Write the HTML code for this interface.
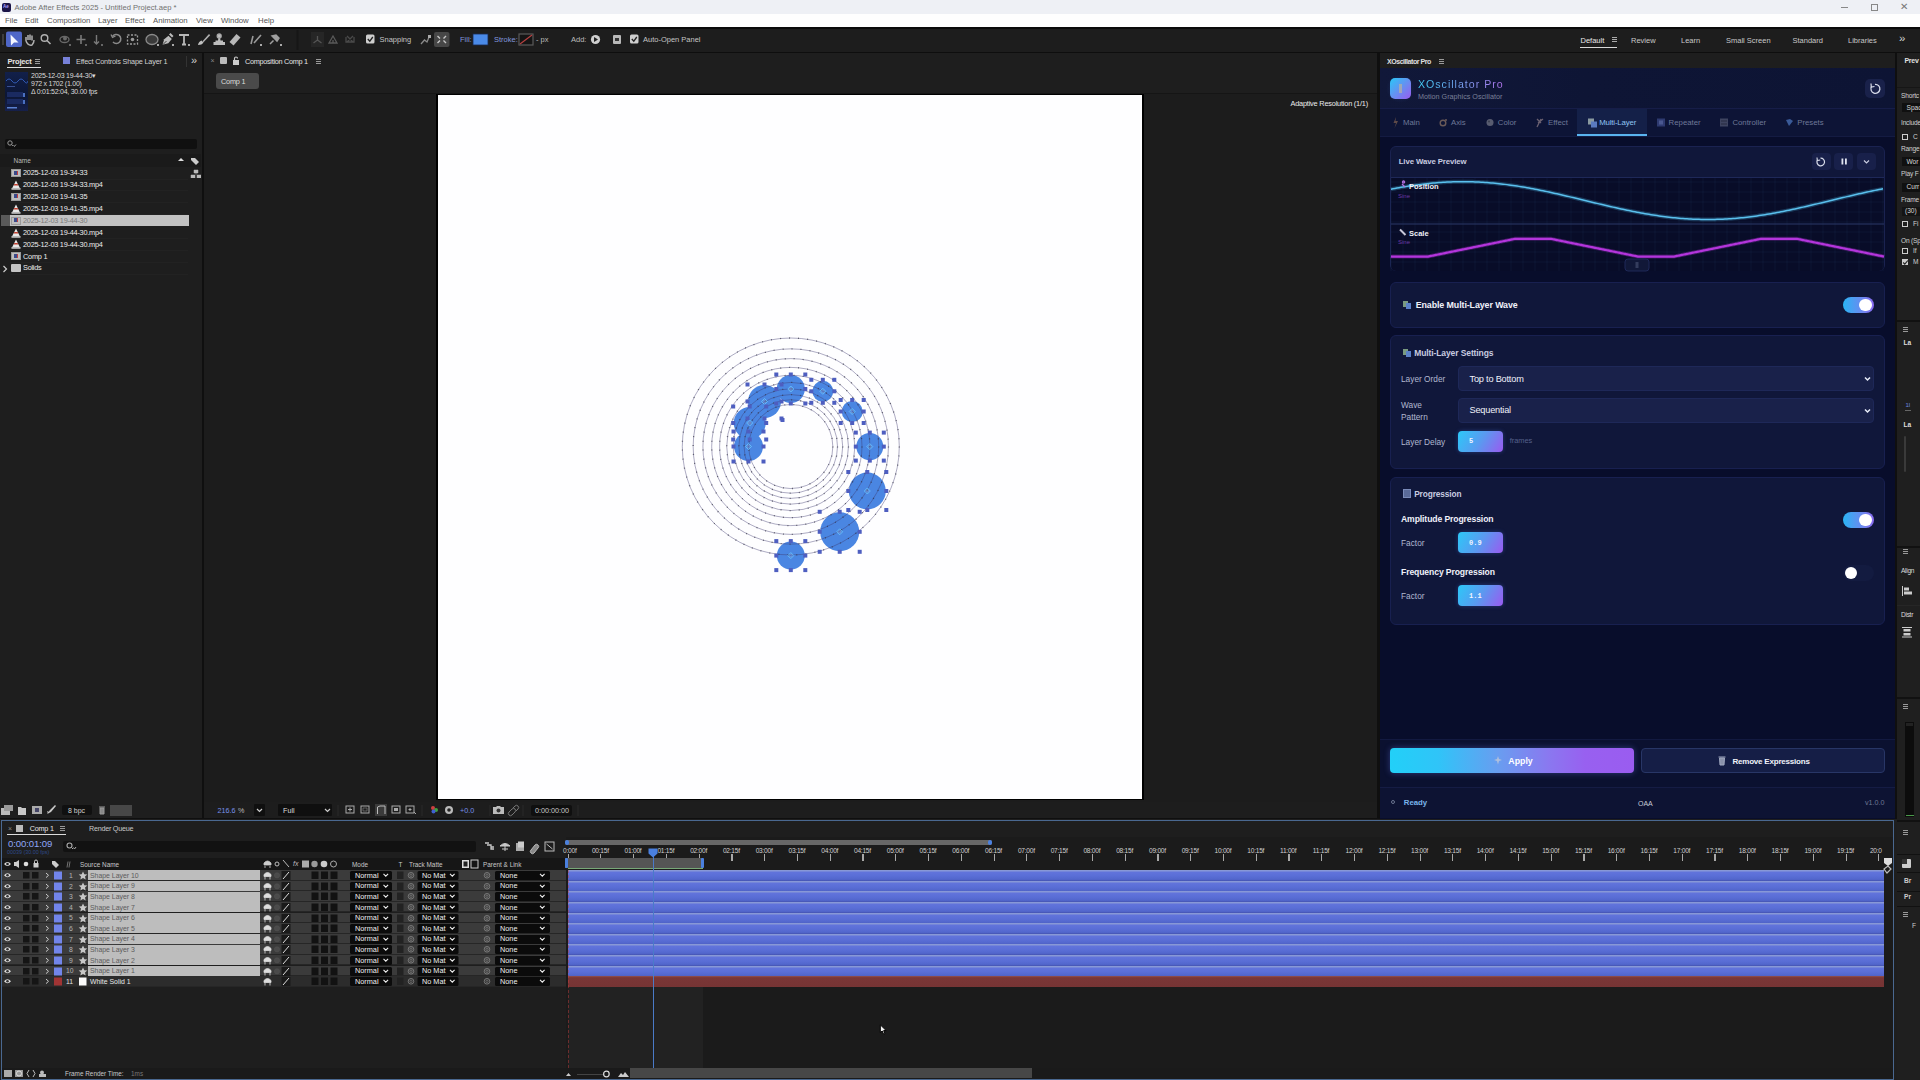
<!DOCTYPE html>
<html><head><meta charset="utf-8">
<style>
*{margin:0;padding:0;box-sizing:border-box}
html,body{width:1920px;height:1080px;overflow:hidden;background:#1c1c1c;font-family:"Liberation Sans",sans-serif;}
.a{position:absolute}
.t{position:absolute;white-space:nowrap;line-height:1}
#title{left:0;top:0;width:1920px;height:14px;background:#eef0f5}
#menu{left:0;top:14px;width:1920px;height:13px;background:#fefefe}
#tool{left:0;top:27px;width:1920px;height:26px;background:#1d1d1d;border-top:2px solid #0b0b0b;border-bottom:1px solid #0e0e0e}
.mt{font-size:7.8px;color:#555;top:17px}
.tt{font-size:7px;color:#bdbdbd}
.g{color:#c4c4c4}
</style></head><body>
<!-- title bar -->
<div id="title" class="a"></div>
<div class="a" style="left:2px;top:3px;width:9px;height:8.5px;background:#1a1446;border-radius:2px"></div><div class="t" style="left:3px;top:5px;font-size:4.5px;color:#a8a0ff;font-weight:bold">Ae</div>
<div class="t" style="left:14.5px;top:3.5px;font-size:7.6px;color:#707070">Adobe After Effects 2025 - Untitled Project.aep *</div>
<div class="a" style="left:1841px;top:7px;width:7px;height:1px;background:#888"></div>
<div class="a" style="left:1871px;top:4px;width:7px;height:7px;border:1px solid #888"></div>
<div class="t" style="left:1900px;top:2px;font-size:10px;color:#777">✕</div>
<!-- menu -->
<div id="menu" class="a"></div>
<div class="t mt" style="left:5px">File</div>
<div class="t mt" style="left:25px">Edit</div>
<div class="t mt" style="left:47px">Composition</div>
<div class="t mt" style="left:98px">Layer</div>
<div class="t mt" style="left:125px">Effect</div>
<div class="t mt" style="left:153px">Animation</div>
<div class="t mt" style="left:196px">View</div>
<div class="t mt" style="left:221px">Window</div>
<div class="t mt" style="left:258px">Help</div>
<!-- toolbar -->
<div id="tool" class="a"></div>

<svg class="a" style="left:0;top:27px" width="720" height="26" viewBox="0 27 720 26">
<g fill="none" stroke="#a8a8a8" stroke-width="1.3">
<line x1="3" y1="34" x2="3" y2="45" stroke="#4a4a4a" stroke-width="1.5"/>
<rect x="6" y="31.5" width="16" height="15.5" rx="2" fill="#4f67c8" stroke="none"/>
<path d="M10.5 34.5 L18.5 42.5 L14 42.5 L11 45.5 Z" fill="#f4f6ff" stroke="none"/>
<path d="M26 41 L26 37 M28 40 L28 35 M30 40 L30 34.5 M32 40.5 L32 35.5 M26 41 Q28 46 32 45 Q34 43 34 40" stroke="#b0b0b0" stroke-width="1.5"/>
<circle cx="44.5" cy="38" r="3.3" stroke="#b0b0b0" stroke-width="1.4"/><line x1="47" y1="40.5" x2="50.5" y2="44" stroke="#b0b0b0" stroke-width="1.6"/>
<ellipse cx="64.5" cy="39.5" rx="4.5" ry="3" stroke="#6a6a6a"/><circle cx="65" cy="38.5" r="2" fill="#6a6a6a" stroke="none"/>
<path d="M81 35 V44 M76.5 39.5 H85.5" stroke="#7a7a7a" stroke-width="1.6"/>
<path d="M96.5 35 V44 M94 41.5 L96.5 44 L99 41.5" stroke="#7a7a7a" stroke-width="1.4"/>
<path d="M112.5 36.5 A4.5 4.5 0 1 1 113 42" stroke="#8a8a8a" stroke-width="1.5"/><path d="M111 34.5 L112.5 37.5 L115.5 36" stroke="#8a8a8a"/>
<rect x="127.5" y="35" width="10" height="9" stroke="#9a9a9a" stroke-dasharray="2 1.5"/><circle cx="132.5" cy="39.5" r="1.8" fill="#9a9a9a" stroke="none"/>
<ellipse cx="152" cy="39.5" rx="6" ry="5" fill="#3a3a3a" stroke="#8a8a8a"/>
<path d="M162.5 44.8 L164.2 39.2 L168.5 35.8 L171.8 39 L168.3 43.2 Z" fill="#bdbdbd" stroke="none"/><path d="M169 34.5 L170.5 33 L173.5 36 L172 37.5 Z" fill="#bdbdbd" stroke="none"/><path d="M163 44.5 L166.5 41" stroke="#1d1d1d" stroke-width="0.8"/>
<path d="M179 35 H189 M184 35 V44.5 M182 44.5 H186" stroke="#b8b8b8" stroke-width="1.8"/>
<path d="M198 45 Q198.5 41.5 201.5 40.5 L203.5 42.5 Q202 45 198 45 Z" fill="#c0c0c0" stroke="none"/><path d="M202.5 41.2 L209 34 L210.2 35.2 L203.5 42.2 Z" fill="#b0b0b0" stroke="none"/>
<path d="M213.5 42 H225 V45 H213.5 Z M215.5 40.5 H223 V42 H215.5Z M218 40.5 L218.5 37.5 H220 L220.5 40.5 Z" fill="#bdbdbd" stroke="none"/><circle cx="219.2" cy="36" r="2" fill="#bdbdbd"/>
<path d="M229.5 42 L236.5 34 L240.5 37.5 L233.5 45.5 Z" fill="#b8b8b8" stroke="none"/>
<path d="M251 44 L253 36 M254 43 L261 35" stroke="#9a9a9a" stroke-width="1.6"/>
<path d="M270 44 L273.5 40.5 M272 36 L276 35 L279 38 L277 41 Z" fill="#a0a0a0" stroke="#a0a0a0" stroke-width="1.5"/>
<g fill="#aaa" stroke="none"><rect x="157" y="44" width="2" height="2"/><rect x="172" y="44" width="2" height="2"/><rect x="188" y="44" width="2" height="2"/><rect x="260" y="44" width="2" height="2"/><rect x="280" y="44" width="2" height="2"/><rect x="69" y="44" width="2" height="2" fill="#666"/><rect x="85" y="44" width="2" height="2" fill="#666"/><rect x="101" y="44" width="2" height="2" fill="#666"/></g>
<line x1="297.5" y1="30" x2="297.5" y2="50" stroke="#161616" stroke-width="2"/>
<rect x="311" y="32" width="13" height="15" fill="#262626" stroke="none"/>
<path d="M317.5 36 V40 L313.5 43 M317.5 40 L321.5 43" stroke="#555"/>
<path d="M333 36 L329 43 H337 Z M333 40 V43" stroke="#5a5a5a"/>
<path d="M347 36 L353 42 M347 42 L353 36 M346 37 V42 H354 V37" stroke="#4a4a4a"/>
<rect x="366" y="34.5" width="8.5" height="9" rx="1.5" fill="#cfcfcf" stroke="none"/>
<path d="M367.8 39 L369.8 41.2 L372.8 37" stroke="#222" stroke-width="1.3"/>
<path d="M421 44 L424.5 40 L427 42 L429.5 36" stroke="#8a8a8a"/><rect x="428" y="35" width="3" height="3" fill="#aaa" stroke="none"/>
<rect x="434" y="32" width="15.5" height="15" rx="2" fill="#474747" stroke="none"/>
<path d="M437.5 36 L440 38.5 M446 36 L443.5 38.5 M437.5 43 L440 40.5 M446 43 L443.5 40.5" stroke="#c8c8c8" stroke-width="1.4"/>
<rect x="473" y="34" width="15" height="11" fill="#4a8ae8" stroke="#1a2a50" stroke-width="0.8"/>
<rect x="519" y="34" width="14" height="11" fill="#151515" stroke="#5a5a5a" stroke-width="1.2"/>
<line x1="520" y1="44" x2="532" y2="35" stroke="#b84040" stroke-width="1.2"/>
<circle cx="595.5" cy="39.5" r="4.6" fill="#cfcfcf" stroke="none"/><path d="M594 37 L598 39.5 L594 42 Z" fill="#222" stroke="none"/>
<rect x="613" y="35" width="8" height="9" rx="1" fill="#b8b8b8" stroke="none"/><rect x="615" y="38" width="4" height="3" fill="#333" stroke="none"/>
<rect x="630" y="34.5" width="8.5" height="9" rx="1.5" fill="#cfcfcf" stroke="none"/>
<path d="M631.8 39 L633.8 41.2 L636.8 37" stroke="#222" stroke-width="1.3"/>
</g></svg>
<div class="t" style="left:379.5px;top:36px;font-size:7.5px;color:#c4c4c4">Snapping</div>
<div class="t" style="left:460px;top:36px;font-size:7.5px;color:#8196dc">Fill:</div>
<div class="t" style="left:494px;top:36px;font-size:7.5px;color:#8196dc">Stroke:</div>
<div class="t" style="left:536px;top:36px;font-size:7.5px;color:#bbb">- px</div>
<div class="t" style="left:571px;top:36px;font-size:7.5px;color:#bbb">Add:</div>
<div class="t" style="left:643px;top:36px;font-size:7.5px;color:#c4c4c4">Auto-Open Panel</div>
<div class="t" style="left:1580.5px;top:36.5px;font-size:7.5px;color:#e8e8e8">Default</div>
<div class="a" style="left:1612px;top:37px;width:5px;height:1px;background:#aaa;box-shadow:0 2px 0 #aaa,0 4px 0 #aaa"></div>
<div class="a" style="left:1580px;top:46.5px;width:37px;height:1.5px;background:#d8d8d8"></div>
<div class="t" style="left:1631px;top:36.5px;font-size:7.5px;color:#c8c8c8">Review</div>
<div class="t" style="left:1681px;top:36.5px;font-size:7.5px;color:#c8c8c8">Learn</div>
<div class="t" style="left:1726px;top:36.5px;font-size:7.5px;color:#c8c8c8">Small Screen</div>
<div class="t" style="left:1792.5px;top:36.5px;font-size:7.5px;color:#c8c8c8">Standard</div>
<div class="t" style="left:1848px;top:36.5px;font-size:7.5px;color:#c8c8c8">Libraries</div>
<div class="t" style="left:1899px;top:33px;font-size:11.5px;color:#d0d0d0">»</div>


<!-- panels bg -->
<div class="a" style="left:0;top:53px;width:1920px;height:1027px;background:#0f0f0f"></div>
<div class="a" style="left:0;top:53px;width:201.5px;height:765px;background:#1e1e1e"></div>
<div class="a" style="left:204px;top:53px;width:1173px;height:765px;background:#1e1e1e"></div>
<div class="a" style="left:1897px;top:53px;width:23px;height:1027px;background:#1f1f1f"></div>
<!-- project header -->
<div class="t" style="left:7.5px;top:57.5px;font-size:7.5px;color:#e6e6e6;font-weight:bold;letter-spacing:-0.2px">Project</div>
<div class="a" style="left:7px;top:66.5px;width:34px;height:1.2px;background:#dcdcdc"></div>
<div class="a" style="left:35px;top:59px;width:5px;height:1px;background:#999;box-shadow:0 2px 0 #999,0 4px 0 #999"></div>
<div class="a" style="left:62.5px;top:57px;width:7.5px;height:7px;background:#7680d8"></div>
<div class="t" style="left:76px;top:57.5px;font-size:7.3px;color:#d0d0d0;letter-spacing:-0.2px">Effect Controls Shape Layer 1</div>
<div class="a" style="left:186px;top:56px;width:1px;height:11px;background:#333"></div>
<div class="t" style="left:191px;top:54.5px;font-size:11px;color:#d0d0d0">»</div>
<!-- thumb -->
<div class="a" style="left:5px;top:72px;width:23px;height:39px;background:linear-gradient(180deg,#12204a,#0c1635 60%,#16204a)"></div>
<svg class="a" style="left:5px;top:72px" width="23" height="39"><path d="M1 9 Q4 5 7 9 T13 9 T19 9 T23 9" stroke="#3a6ad0" fill="none" stroke-width="0.8"/><rect x="2" y="14" width="8" height="1" fill="#3a5090"/><rect x="2" y="20" width="16" height="5" fill="#1a2a60"/><rect x="2" y="27" width="16" height="5" fill="#1a2a60"/><rect x="2" y="35" width="10" height="1.5" fill="#5a80d0"/><rect x="18" y="21" width="2" height="4" fill="#4a70c0"/><rect x="18" y="28" width="2" height="4" fill="#4a70c0"/></svg>
<div class="t" style="left:31px;top:72px;font-size:7px;color:#dadada;letter-spacing:-0.25px">2025-12-03 19-44-30▾</div>
<div class="t" style="left:31px;top:80px;font-size:7px;color:#dadada;letter-spacing:-0.25px">972 x 1702 (1.00)</div>
<div class="t" style="left:31px;top:88px;font-size:7px;color:#dadada;letter-spacing:-0.25px">Δ 0:01:52:04, 30.00 fps</div>
<!-- search -->
<div class="a" style="left:5px;top:139px;width:192px;height:10px;background:#101010;border-radius:2px"></div>
<svg class="a" style="left:7px;top:140px" width="10" height="8"><circle cx="3" cy="3" r="2.2" stroke="#999" fill="none" stroke-width="1"/><path d="M4.5 4.5 L6 6 M6.5 5 L7.5 6.5 L9 4.5" stroke="#999" fill="none" stroke-width="0.9"/></svg>
<div class="a" style="left:0;top:154px;width:201px;height:13px;background:#1a1a1a"></div>
<div class="t" style="left:13.5px;top:157.5px;font-size:6.5px;color:#bbb">Name</div>
<svg class="a" style="left:177px;top:156px" width="24" height="22"><path d="M1 5 L4 2 L7 5 Z" fill="#ddd"/><path d="M14 2 H18 L22 6 L19 9 L14 4 Z" fill="#ccc"/><path d="M17 14 h4 v3 h-4z M14 19 h4 v3 h-4z M20 19 h4 v3 h-4z M19 17 v2" fill="#bbb" stroke="#bbb" stroke-width="0.5"/></svg>

<div class="a" style="left:10px;top:178.5px;width:178px;height:0.6px;background:#222"></div>
<div class="a" style="left:11px;top:169.0px;width:10px;height:8px;background:#bdbdbd;border:1px solid #9a9a9a"></div><div class="a" style="left:14px;top:170.5px;width:4px;height:4px;background:#3a4a8a;border-right:1.5px solid #c04040"></div>
<div class="t" style="left:23px;top:169.2px;font-size:7.35px;color:#ececec;letter-spacing:-0.25px">2025-12-03 19-34-33</div>
<div class="a" style="left:10px;top:190.4px;width:178px;height:0.6px;background:#222"></div>
<svg class="a" style="left:11px;top:179.9px" width="10" height="10"><path d="M5 0.5 L9.5 9.5 H0.5 Z" fill="#e8e8e8"/><path d="M3.3 4 H6.7 L7.3 5.5 H2.7 Z" fill="#c04030"/><rect x="0.5" y="8" width="9" height="1.5" fill="#bbb"/></svg>
<div class="t" style="left:23px;top:181.1px;font-size:7.35px;color:#ececec;letter-spacing:-0.25px">2025-12-03 19-34-33.mp4</div>
<div class="a" style="left:10px;top:202.3px;width:178px;height:0.6px;background:#222"></div>
<div class="a" style="left:11px;top:192.8px;width:10px;height:8px;background:#bdbdbd;border:1px solid #9a9a9a"></div><div class="a" style="left:14px;top:194.3px;width:4px;height:4px;background:#3a4a8a;border-right:1.5px solid #c04040"></div>
<div class="t" style="left:23px;top:193.0px;font-size:7.35px;color:#ececec;letter-spacing:-0.25px">2025-12-03 19-41-35</div>
<div class="a" style="left:10px;top:214.2px;width:178px;height:0.6px;background:#222"></div>
<svg class="a" style="left:11px;top:203.7px" width="10" height="10"><path d="M5 0.5 L9.5 9.5 H0.5 Z" fill="#e8e8e8"/><path d="M3.3 4 H6.7 L7.3 5.5 H2.7 Z" fill="#c04030"/><rect x="0.5" y="8" width="9" height="1.5" fill="#bbb"/></svg>
<div class="t" style="left:23px;top:204.9px;font-size:7.35px;color:#ececec;letter-spacing:-0.25px">2025-12-03 19-41-35.mp4</div>
<div class="a" style="left:1px;top:214.7px;width:187.5px;height:11.5px;background:#c2c2c2"></div>
<div class="a" style="left:1px;top:214.7px;width:9px;height:11.5px;background:#5a5a5a"></div>
<div class="a" style="left:11px;top:216.6px;width:10px;height:8px;background:#bdbdbd;border:1px solid #9a9a9a"></div><div class="a" style="left:14px;top:218.1px;width:4px;height:4px;background:#3a4a8a;border-right:1.5px solid #c04040"></div>
<div class="t" style="left:23px;top:216.8px;font-size:7.35px;color:#7a7a7a;letter-spacing:-0.25px">2025-12-03 19-44-30</div>
<div class="a" style="left:10px;top:238.0px;width:178px;height:0.6px;background:#222"></div>
<svg class="a" style="left:11px;top:227.5px" width="10" height="10"><path d="M5 0.5 L9.5 9.5 H0.5 Z" fill="#e8e8e8"/><path d="M3.3 4 H6.7 L7.3 5.5 H2.7 Z" fill="#c04030"/><rect x="0.5" y="8" width="9" height="1.5" fill="#bbb"/></svg>
<div class="t" style="left:23px;top:228.7px;font-size:7.35px;color:#ececec;letter-spacing:-0.25px">2025-12-03 19-44-30.mp4</div>
<div class="a" style="left:10px;top:249.9px;width:178px;height:0.6px;background:#222"></div>
<svg class="a" style="left:11px;top:239.4px" width="10" height="10"><path d="M5 0.5 L9.5 9.5 H0.5 Z" fill="#e8e8e8"/><path d="M3.3 4 H6.7 L7.3 5.5 H2.7 Z" fill="#c04030"/><rect x="0.5" y="8" width="9" height="1.5" fill="#bbb"/></svg>
<div class="t" style="left:23px;top:240.6px;font-size:7.35px;color:#ececec;letter-spacing:-0.25px">2025-12-03 19-44-30.mp4</div>
<div class="a" style="left:10px;top:261.8px;width:178px;height:0.6px;background:#222"></div>
<div class="a" style="left:11px;top:252.3px;width:10px;height:8px;background:#bdbdbd;border:1px solid #9a9a9a"></div><div class="a" style="left:14px;top:253.8px;width:4px;height:4px;background:#3a4a8a;border-right:1.5px solid #c04040"></div>
<div class="t" style="left:23px;top:252.5px;font-size:7.35px;color:#ececec;letter-spacing:-0.25px">Comp 1</div>
<div class="a" style="left:10px;top:273.6px;width:178px;height:0.6px;background:#222"></div>
<div class="a" style="left:11px;top:264.2px;width:10px;height:8px;background:#c4c4c4;border-radius:1px"></div><svg class="a" style="left:2px;top:265.2px" width="6" height="8"><path d="M1.5 1 L4.5 4 L1.5 7" stroke="#ccc" fill="none" stroke-width="1.2"/></svg>
<div class="t" style="left:23px;top:264.4px;font-size:7.35px;color:#ececec;letter-spacing:-0.25px">Solids</div>

<!-- project bottom bar -->
<svg class="a" style="left:0;top:802px" width="140" height="16">
<rect x="1" y="6" width="9" height="7" fill="#bbb"/><rect x="4" y="3" width="9" height="6" fill="#999"/>
<path d="M18 5 h3 l1 1 h4 v7 h-8z" fill="#c8c8c8"/>
<rect x="32" y="4" width="10" height="8" fill="#aaa"/><rect x="35" y="6" width="4" height="4" fill="#446"/>
<path d="M47 12 L50 8 L55 3 L56 4 L51 10 Z M47 9 L49 10 L48 12 Z" fill="#c8c8c8"/>
<rect x="62" y="3" width="30" height="10" rx="2" fill="#101010"/>
<path d="M99 5 h6 M100 6 h4 v6 h-4z" stroke="#999" fill="#888" stroke-width="1"/>
<rect x="110" y="3" width="22" height="11" fill="#474747"/>
</svg>
<div class="t" style="left:68px;top:807px;font-size:7px;color:#d0d0d0">8 bpc</div>


<!-- comp header -->
<div class="t" style="left:210.5px;top:57px;font-size:7px;color:#888">×</div>
<div class="a" style="left:220px;top:57px;width:6.5px;height:6.5px;background:#bbb;border-radius:1px"></div>
<svg class="a" style="left:232px;top:56px" width="8" height="9"><rect x="1" y="4" width="6" height="5" fill="#ccc"/><path d="M2.5 4 V2.5 A1.5 1.5 0 0 1 5.5 2.5" stroke="#ccc" fill="none" stroke-width="1.2"/></svg>
<div class="t" style="left:245px;top:57.5px;font-size:7.3px;color:#e2e2e2;letter-spacing:-0.3px">Composition Comp 1</div>
<div class="a" style="left:316px;top:59px;width:5px;height:1px;background:#999;box-shadow:0 2px 0 #999,0 4px 0 #999"></div>
<div class="a" style="left:216px;top:73px;width:43px;height:16px;background:#4a4a4a;border-radius:3px"></div>
<div class="t" style="left:221px;top:77.5px;font-size:7.3px;color:#dcdcdc;letter-spacing:-0.2px">Comp 1</div>
<div class="a" style="left:204px;top:93px;width:1173px;height:1px;background:#151515"></div>
<div class="a" style="left:204px;top:94px;width:1173px;height:708px;background:#1c1c1c"></div>
<div class="t" style="left:1290.5px;top:99.5px;font-size:7.35px;color:#ececec;letter-spacing:-0.2px">Adaptive Resolution (1/1)</div>
<div class="a" style="left:436px;top:93.5px;width:707.5px;height:706.5px;background:#000"></div>
<div class="a" style="left:437.5px;top:95px;width:704.5px;height:704px;background:#fefeff"></div>
<svg class="a" style="left:437.5px;top:95px" width="705" height="704" viewBox="437.5 95 705 704">
<circle cx="790.3" cy="389" r="14" fill="#4a86e2"/>
<circle cx="822.3" cy="391.3" r="10.5" fill="#4a86e2"/>
<circle cx="851.7" cy="411.5" r="10.5" fill="#4a86e2"/>
<circle cx="869.3" cy="446.6" r="13.5" fill="#4a86e2"/>
<circle cx="866.8" cy="491" r="18.5" fill="#4a86e2"/>
<circle cx="839.2" cy="531.8" r="19.5" fill="#4a86e2"/>
<circle cx="790.3" cy="555.6" r="14" fill="#4a86e2"/>
<circle cx="764" cy="401.5" r="16.5" fill="#4a86e2"/>
<circle cx="749.2" cy="423" r="16" fill="#4a86e2"/>
<circle cx="748" cy="446.5" r="14.5" fill="#4a86e2"/>
<circle cx="790.3" cy="446.5" r="108.50" fill="none" stroke="rgba(60,55,110,0.6)" stroke-width="0.7"/>
<circle cx="790.3" cy="446.5" r="108.50" fill="none" stroke="rgba(50,50,65,0.7)" stroke-width="1.3" stroke-dasharray="1 8.090"/>
<circle cx="790.3" cy="446.5" r="97.65" fill="none" stroke="rgba(60,55,110,0.6)" stroke-width="0.7"/>
<circle cx="790.3" cy="446.5" r="97.65" fill="none" stroke="rgba(50,50,65,0.7)" stroke-width="1.3" stroke-dasharray="1 8.023"/>
<circle cx="790.3" cy="446.5" r="87.89" fill="none" stroke="rgba(60,55,110,0.6)" stroke-width="0.7"/>
<circle cx="790.3" cy="446.5" r="87.89" fill="none" stroke="rgba(50,50,65,0.7)" stroke-width="1.3" stroke-dasharray="1 8.052"/>
<circle cx="790.3" cy="446.5" r="79.10" fill="none" stroke="rgba(60,55,110,0.6)" stroke-width="0.7"/>
<circle cx="790.3" cy="446.5" r="79.10" fill="none" stroke="rgba(50,50,65,0.7)" stroke-width="1.3" stroke-dasharray="1 8.036"/>
<circle cx="790.3" cy="446.5" r="71.19" fill="none" stroke="rgba(60,55,110,0.6)" stroke-width="0.7"/>
<circle cx="790.3" cy="446.5" r="71.19" fill="none" stroke="rgba(50,50,65,0.7)" stroke-width="1.3" stroke-dasharray="1 8.128"/>
<circle cx="790.3" cy="446.5" r="64.07" fill="none" stroke="rgba(60,55,110,0.6)" stroke-width="0.7"/>
<circle cx="790.3" cy="446.5" r="64.07" fill="none" stroke="rgba(50,50,65,0.7)" stroke-width="1.3" stroke-dasharray="1 8.149"/>
<circle cx="790.3" cy="446.5" r="57.66" fill="none" stroke="rgba(60,55,110,0.6)" stroke-width="0.7"/>
<circle cx="790.3" cy="446.5" r="57.66" fill="none" stroke="rgba(50,50,65,0.7)" stroke-width="1.3" stroke-dasharray="1 8.057"/>
<circle cx="790.3" cy="446.5" r="51.90" fill="none" stroke="rgba(60,55,110,0.6)" stroke-width="0.7"/>
<circle cx="790.3" cy="446.5" r="51.90" fill="none" stroke="rgba(50,50,65,0.7)" stroke-width="1.3" stroke-dasharray="1 8.057"/>
<circle cx="790.3" cy="446.5" r="46.71" fill="none" stroke="rgba(60,55,110,0.6)" stroke-width="0.7"/>
<circle cx="790.3" cy="446.5" r="46.71" fill="none" stroke="rgba(50,50,65,0.7)" stroke-width="1.3" stroke-dasharray="1 8.171"/>
<circle cx="790.3" cy="446.5" r="42.04" fill="none" stroke="rgba(60,55,110,0.6)" stroke-width="0.7"/>
<circle cx="790.3" cy="446.5" r="42.04" fill="none" stroke="rgba(50,50,65,0.7)" stroke-width="1.3" stroke-dasharray="1 8.107"/>
<rect x="773.8" y="372.5" width="4" height="4" fill="#4e5ec0"/>
<rect x="773.8" y="387.0" width="4" height="4" fill="#4e5ec0"/>
<rect x="773.8" y="401.5" width="4" height="4" fill="#4e5ec0"/>
<rect x="788.3" y="372.5" width="4" height="4" fill="#4e5ec0"/>
<rect x="788.3" y="401.5" width="4" height="4" fill="#4e5ec0"/>
<rect x="802.8" y="372.5" width="4" height="4" fill="#4e5ec0"/>
<rect x="802.8" y="387.0" width="4" height="4" fill="#4e5ec0"/>
<rect x="802.8" y="401.5" width="4" height="4" fill="#4e5ec0"/>
<path d="M787.3 389 L790.3 386 L793.3 389 L790.3 392 Z" fill="none" stroke="#6ac8ff" stroke-width="0.8"/><circle cx="790.3" cy="389" r="1.2" fill="none" stroke="#8a9ac8" stroke-width="0.6"/>
<rect x="808.8" y="377.8" width="4" height="4" fill="#4e5ec0"/>
<rect x="808.8" y="389.3" width="4" height="4" fill="#4e5ec0"/>
<rect x="808.8" y="400.8" width="4" height="4" fill="#4e5ec0"/>
<rect x="820.3" y="377.8" width="4" height="4" fill="#4e5ec0"/>
<rect x="820.3" y="400.8" width="4" height="4" fill="#4e5ec0"/>
<rect x="831.8" y="377.8" width="4" height="4" fill="#4e5ec0"/>
<rect x="831.8" y="389.3" width="4" height="4" fill="#4e5ec0"/>
<rect x="831.8" y="400.8" width="4" height="4" fill="#4e5ec0"/>
<path d="M819.3 391.3 L822.3 388.3 L825.3 391.3 L822.3 394.3 Z" fill="none" stroke="#6ac8ff" stroke-width="0.8"/><circle cx="822.3" cy="391.3" r="1.2" fill="none" stroke="#8a9ac8" stroke-width="0.6"/>
<rect x="838.2" y="398.0" width="4" height="4" fill="#4e5ec0"/>
<rect x="838.2" y="409.5" width="4" height="4" fill="#4e5ec0"/>
<rect x="838.2" y="421.0" width="4" height="4" fill="#4e5ec0"/>
<rect x="849.7" y="398.0" width="4" height="4" fill="#4e5ec0"/>
<rect x="849.7" y="421.0" width="4" height="4" fill="#4e5ec0"/>
<rect x="861.2" y="398.0" width="4" height="4" fill="#4e5ec0"/>
<rect x="861.2" y="409.5" width="4" height="4" fill="#4e5ec0"/>
<rect x="861.2" y="421.0" width="4" height="4" fill="#4e5ec0"/>
<path d="M848.7 411.5 L851.7 408.5 L854.7 411.5 L851.7 414.5 Z" fill="none" stroke="#6ac8ff" stroke-width="0.8"/><circle cx="851.7" cy="411.5" r="1.2" fill="none" stroke="#8a9ac8" stroke-width="0.6"/>
<rect x="853.3" y="430.6" width="4" height="4" fill="#4e5ec0"/>
<rect x="853.3" y="444.6" width="4" height="4" fill="#4e5ec0"/>
<rect x="853.3" y="458.6" width="4" height="4" fill="#4e5ec0"/>
<rect x="867.3" y="430.6" width="4" height="4" fill="#4e5ec0"/>
<rect x="867.3" y="458.6" width="4" height="4" fill="#4e5ec0"/>
<rect x="881.3" y="430.6" width="4" height="4" fill="#4e5ec0"/>
<rect x="881.3" y="444.6" width="4" height="4" fill="#4e5ec0"/>
<rect x="881.3" y="458.6" width="4" height="4" fill="#4e5ec0"/>
<path d="M866.3 446.6 L869.3 443.6 L872.3 446.6 L869.3 449.6 Z" fill="none" stroke="#6ac8ff" stroke-width="0.8"/><circle cx="869.3" cy="446.6" r="1.2" fill="none" stroke="#8a9ac8" stroke-width="0.6"/>
<rect x="845.8" y="470.0" width="4" height="4" fill="#4e5ec0"/>
<rect x="845.8" y="489.0" width="4" height="4" fill="#4e5ec0"/>
<rect x="845.8" y="508.0" width="4" height="4" fill="#4e5ec0"/>
<rect x="864.8" y="470.0" width="4" height="4" fill="#4e5ec0"/>
<rect x="864.8" y="508.0" width="4" height="4" fill="#4e5ec0"/>
<rect x="883.8" y="470.0" width="4" height="4" fill="#4e5ec0"/>
<rect x="883.8" y="489.0" width="4" height="4" fill="#4e5ec0"/>
<rect x="883.8" y="508.0" width="4" height="4" fill="#4e5ec0"/>
<path d="M863.8 491 L866.8 488 L869.8 491 L866.8 494 Z" fill="none" stroke="#6ac8ff" stroke-width="0.8"/><circle cx="866.8" cy="491" r="1.2" fill="none" stroke="#8a9ac8" stroke-width="0.6"/>
<rect x="817.2" y="509.8" width="4" height="4" fill="#4e5ec0"/>
<rect x="817.2" y="529.8" width="4" height="4" fill="#4e5ec0"/>
<rect x="817.2" y="549.8" width="4" height="4" fill="#4e5ec0"/>
<rect x="837.2" y="509.8" width="4" height="4" fill="#4e5ec0"/>
<rect x="837.2" y="549.8" width="4" height="4" fill="#4e5ec0"/>
<rect x="857.2" y="509.8" width="4" height="4" fill="#4e5ec0"/>
<rect x="857.2" y="529.8" width="4" height="4" fill="#4e5ec0"/>
<rect x="857.2" y="549.8" width="4" height="4" fill="#4e5ec0"/>
<path d="M836.2 531.8 L839.2 528.8 L842.2 531.8 L839.2 534.8 Z" fill="none" stroke="#6ac8ff" stroke-width="0.8"/><circle cx="839.2" cy="531.8" r="1.2" fill="none" stroke="#8a9ac8" stroke-width="0.6"/>
<rect x="773.8" y="539.1" width="4" height="4" fill="#4e5ec0"/>
<rect x="773.8" y="553.6" width="4" height="4" fill="#4e5ec0"/>
<rect x="773.8" y="568.1" width="4" height="4" fill="#4e5ec0"/>
<rect x="788.3" y="539.1" width="4" height="4" fill="#4e5ec0"/>
<rect x="788.3" y="568.1" width="4" height="4" fill="#4e5ec0"/>
<rect x="802.8" y="539.1" width="4" height="4" fill="#4e5ec0"/>
<rect x="802.8" y="553.6" width="4" height="4" fill="#4e5ec0"/>
<rect x="802.8" y="568.1" width="4" height="4" fill="#4e5ec0"/>
<path d="M787.3 555.6 L790.3 552.6 L793.3 555.6 L790.3 558.6 Z" fill="none" stroke="#6ac8ff" stroke-width="0.8"/><circle cx="790.3" cy="555.6" r="1.2" fill="none" stroke="#8a9ac8" stroke-width="0.6"/>
<rect x="745.0" y="382.5" width="4" height="4" fill="#4e5ec0"/>
<rect x="745.0" y="399.5" width="4" height="4" fill="#4e5ec0"/>
<rect x="745.0" y="416.5" width="4" height="4" fill="#4e5ec0"/>
<rect x="762.0" y="382.5" width="4" height="4" fill="#4e5ec0"/>
<rect x="762.0" y="416.5" width="4" height="4" fill="#4e5ec0"/>
<rect x="779.0" y="382.5" width="4" height="4" fill="#4e5ec0"/>
<rect x="779.0" y="399.5" width="4" height="4" fill="#4e5ec0"/>
<rect x="779.0" y="416.5" width="4" height="4" fill="#4e5ec0"/>
<path d="M761 401.5 L764 398.5 L767 401.5 L764 404.5 Z" fill="none" stroke="#6ac8ff" stroke-width="0.8"/><circle cx="764" cy="401.5" r="1.2" fill="none" stroke="#8a9ac8" stroke-width="0.6"/>
<rect x="730.7" y="404.5" width="4" height="4" fill="#4e5ec0"/>
<rect x="730.7" y="421.0" width="4" height="4" fill="#4e5ec0"/>
<rect x="730.7" y="437.5" width="4" height="4" fill="#4e5ec0"/>
<rect x="747.2" y="404.5" width="4" height="4" fill="#4e5ec0"/>
<rect x="747.2" y="437.5" width="4" height="4" fill="#4e5ec0"/>
<rect x="763.7" y="404.5" width="4" height="4" fill="#4e5ec0"/>
<rect x="763.7" y="421.0" width="4" height="4" fill="#4e5ec0"/>
<rect x="763.7" y="437.5" width="4" height="4" fill="#4e5ec0"/>
<path d="M746.2 423 L749.2 420 L752.2 423 L749.2 426 Z" fill="none" stroke="#6ac8ff" stroke-width="0.8"/><circle cx="749.2" cy="423" r="1.2" fill="none" stroke="#8a9ac8" stroke-width="0.6"/>
<rect x="731.0" y="429.5" width="4" height="4" fill="#4e5ec0"/>
<rect x="731.0" y="444.5" width="4" height="4" fill="#4e5ec0"/>
<rect x="731.0" y="459.5" width="4" height="4" fill="#4e5ec0"/>
<rect x="746.0" y="429.5" width="4" height="4" fill="#4e5ec0"/>
<rect x="746.0" y="459.5" width="4" height="4" fill="#4e5ec0"/>
<rect x="761.0" y="429.5" width="4" height="4" fill="#4e5ec0"/>
<rect x="761.0" y="444.5" width="4" height="4" fill="#4e5ec0"/>
<rect x="761.0" y="459.5" width="4" height="4" fill="#4e5ec0"/>
<path d="M745 446.5 L748 443.5 L751 446.5 L748 449.5 Z" fill="none" stroke="#6ac8ff" stroke-width="0.8"/><circle cx="748" cy="446.5" r="1.2" fill="none" stroke="#8a9ac8" stroke-width="0.6"/>
<rect x="780.0" y="418.0" width="4" height="4" fill="#4e5ec0"/>
</svg>
<!-- viewer bottom bar -->
<div class="a" style="left:204px;top:802px;width:1173px;height:16px;background:#1d1d1d"></div>
<div class="t" style="left:217.5px;top:807px;font-size:7.2px;color:#7890e8">216.6</div>
<div class="t" style="left:238px;top:807px;font-size:7.2px;color:#bbb">%</div>
<div class="a" style="left:254px;top:804px;width:11px;height:12px;background:#0f0f0f;border-radius:1px"></div>
<div class="a" style="left:278px;top:804px;width:54px;height:12px;background:#0f0f0f;border-radius:1px"></div>
<div class="t" style="left:283px;top:807px;font-size:7.2px;color:#ddd">Full</div>
<svg class="a" style="left:204px;top:802px" width="400" height="16">
<path d="M53 7 L55.5 9.5 L58 7" stroke="#ccc" fill="none" stroke-width="1.2"/>
<path d="M121 7 L123.5 9.5 L126 7" stroke="#ccc" fill="none" stroke-width="1.2"/>
<line x1="134" y1="3" x2="134" y2="14" stroke="#2a2a2a"/>
<rect x="142" y="4" width="8" height="7" stroke="#aaa" fill="none"/><path d="M144 7.5 h4 M146 5.5 v4" stroke="#aaa"/>
<rect x="157" y="4" width="8" height="7" stroke="#aaa" fill="none"/><path d="M159 6 h4 v3 h-4z" stroke="#888" fill="none" stroke-width="0.6"/>
<rect x="171" y="2" width="12" height="12" fill="#3a3a3a"/><path d="M173.5 12 V5 L176 4 H181 V12" stroke="#bbb" fill="none"/>
<rect x="188" y="4" width="8" height="7" stroke="#aaa" fill="none"/><rect x="190" y="6" width="4" height="3" fill="#aaa"/>
<rect x="202" y="4" width="8" height="7" stroke="#aaa" fill="none"/><path d="M206 6 v3 M204.5 7.5 h3 M210 10 l2 2" stroke="#aaa"/>
<line x1="218" y1="3" x2="218" y2="14" stroke="#2a2a2a"/>
<circle cx="229" cy="6" r="2" fill="#d04040"/><circle cx="232" cy="8" r="2" fill="#40a040"/><circle cx="229.5" cy="9.5" r="2" fill="#4060d0"/>
<circle cx="245" cy="8" r="4" fill="#bbb"/><circle cx="245" cy="8" r="1.8" fill="#222"/>
<line x1="286" y1="3" x2="286" y2="14" stroke="#2a2a2a"/>
<path d="M289 5 h3 l1 -1 h3 l1 1 h3 v7 h-11z" fill="#bbb"/><circle cx="294.5" cy="8.5" r="2" fill="#333"/>
<path d="M305 10 l3 -3 a2 2 0 0 1 3 3 l-3 3 a2 2 0 0 1 -3 -3z M309 6 l2 -2 a2 2 0 0 1 3 3 l-2 2" stroke="#777" fill="none"/>
<line x1="319" y1="3" x2="319" y2="14" stroke="#2a2a2a"/>
<rect x="327" y="3" width="41" height="11" rx="2" fill="#0f0f0f"/>
<line x1="374" y1="3" x2="374" y2="14" stroke="#2a2a2a"/>
</svg>
<div class="t" style="left:460px;top:807px;font-size:7.2px;color:#7890e8">+0.0</div>
<div class="t" style="left:535px;top:807px;font-size:7.2px;color:#ccc">0:00:00:00</div>


<!-- plugin panel -->
<div class="a" style="left:1380px;top:53px;width:514.5px;height:14.5px;background:#1e1e1e"></div>
<div class="t" style="left:1387px;top:57.5px;font-size:7px;color:#e0e0e0;font-weight:bold;letter-spacing:-0.45px">XOscillator Pro</div>
<div class="a" style="left:1438.5px;top:58.5px;width:5px;height:1px;background:#999;box-shadow:0 2px 0 #999,0 4px 0 #999"></div>
<div class="a" style="left:1380px;top:67.5px;width:514.5px;height:751px;background:#080d2b"></div>
<div class="a" style="left:1380px;top:67.5px;width:514.5px;height:41.5px;background:linear-gradient(90deg,#111839,#0e1535 40%,#0d1434);border-bottom:1px solid #161d48"></div>
<div class="a" style="left:1386px;top:74px;width:29px;height:29px;border-radius:10px;background:radial-gradient(circle,rgba(70,120,220,0.25),rgba(70,120,220,0) 70%)"></div>
<div class="a" style="left:1390px;top:78px;width:21px;height:21px;border-radius:5px;background:linear-gradient(135deg,#28c8f8,#6a8cf0 55%,#9a5af0)"></div>
<div class="a" style="left:1399px;top:84px;width:3px;height:9px;background:#b8b0a0;opacity:0.7"></div>
<div class="t" style="left:1418px;top:78.5px;font-size:10.6px;font-weight:normal;letter-spacing:1px;background:linear-gradient(90deg,#40d0f8,#78a0f0 50%,#9a88f0 80%,#b070e8);-webkit-background-clip:text;color:transparent">XOscillator Pro</div>
<div class="t" style="left:1418px;top:92.5px;font-size:7.2px;color:#7a8098">Motion Graphics Oscillator</div>
<div class="a" style="left:1865px;top:78.5px;width:19.5px;height:19.5px;border-radius:5px;background:#19214a"></div>
<svg class="a" style="left:1865px;top:78.5px" width="20" height="20"><path d="M6.5 7.5 A4.5 4.5 0 1 0 10 5.3" stroke="#d8dcea" fill="none" stroke-width="1.3"/><path d="M6 4.5 L6.3 8 L9.5 7.5" stroke="#d8dcea" fill="none" stroke-width="1.2"/></svg>
<!-- tabs -->
<div class="a" style="left:1380px;top:109px;width:514.5px;height:28px;background:#0d1436;border-bottom:1px solid #141b42"></div>
<div class="a" style="left:1577px;top:109px;width:69.5px;height:28px;background:#142048"></div>
<div class="a" style="left:1577px;top:134.3px;width:69.5px;height:2px;background:#5ab4f0"></div>
<div class="t" style="left:1403px;top:118.5px;font-size:7.8px;color:#6e7898">Main</div>
<div class="t" style="left:1451px;top:118.5px;font-size:7.8px;color:#6e7898">Axis</div>
<div class="t" style="left:1497.8px;top:118.5px;font-size:7.8px;color:#6e7898">Color</div>
<div class="t" style="left:1548px;top:118.5px;font-size:7.8px;color:#6e7898">Effect</div>
<div class="t" style="left:1599.2px;top:118.5px;font-size:7.8px;color:#90c4f4;letter-spacing:-0.15px">Multi-Layer</div>
<div class="t" style="left:1668.6px;top:118.5px;font-size:7.8px;color:#6e7898">Repeater</div>
<div class="t" style="left:1732.4px;top:118.5px;font-size:7.8px;color:#6e7898">Controller</div>
<div class="t" style="left:1797.2px;top:118.5px;font-size:7.8px;color:#6e7898">Presets</div>
<svg class="a" style="left:1380px;top:109px" width="515" height="28">
<path d="M16 8 L13.5 14 H16 L14.5 19 L18 12 H15.5 Z" fill="#5e4a48"/>
<circle cx="63" cy="14" r="2.8" fill="none" stroke="#6a5a58" stroke-width="1.4"/><circle cx="66" cy="11" r="1" fill="#6a5a58"/>
<circle cx="110" cy="13.5" r="3.5" fill="#585c70"/><circle cx="109" cy="12.5" r="1" fill="#3a3e50"/>
<path d="M157 10 L161 14 M161 10 L157 18 M163 10 L158 14" stroke="#6a6070" stroke-width="1.3"/>
<rect x="208" y="9.5" width="6" height="6" fill="#8a9aa0"/><rect x="211" y="12.5" width="6" height="6" fill="#5a7ac0"/>
<rect x="277" y="9.5" width="8" height="8" fill="#2e3a70"/><rect x="279" y="11.5" width="4" height="4" fill="#4a5890"/>
<rect x="340" y="9.5" width="8" height="8" fill="#3e4460"/><path d="M341 12 h6 M341 15 h6" stroke="#262a40"/>
<path d="M406 11 L410 10 L413 12 L409 17 Z" fill="#3a5a98"/>
</svg>
<!-- card 1 -->
<div class="a" style="left:1390px;top:146.3px;width:494.5px;height:125px;border-radius:6px;background:#10173a;border:1px solid #1a2250"></div>
<div class="a" style="left:1391px;top:177.5px;width:492.5px;height:93px;background:#080c28;border-radius:0 0 5px 5px"></div>
<svg class="a" style="left:0;top:0" width="1920" height="280" viewBox="0 0 1920 280">
<line x1="1391" y1="178" x2="1391" y2="271" stroke="rgba(60,80,140,0.12)" stroke-width="1"/><line x1="1403" y1="178" x2="1403" y2="271" stroke="rgba(60,80,140,0.12)" stroke-width="1"/><line x1="1415" y1="178" x2="1415" y2="271" stroke="rgba(60,80,140,0.12)" stroke-width="1"/><line x1="1427" y1="178" x2="1427" y2="271" stroke="rgba(60,80,140,0.12)" stroke-width="1"/><line x1="1439" y1="178" x2="1439" y2="271" stroke="rgba(60,80,140,0.12)" stroke-width="1"/><line x1="1451" y1="178" x2="1451" y2="271" stroke="rgba(60,80,140,0.12)" stroke-width="1"/><line x1="1463" y1="178" x2="1463" y2="271" stroke="rgba(60,80,140,0.12)" stroke-width="1"/><line x1="1475" y1="178" x2="1475" y2="271" stroke="rgba(60,80,140,0.12)" stroke-width="1"/><line x1="1487" y1="178" x2="1487" y2="271" stroke="rgba(60,80,140,0.12)" stroke-width="1"/><line x1="1499" y1="178" x2="1499" y2="271" stroke="rgba(60,80,140,0.12)" stroke-width="1"/><line x1="1511" y1="178" x2="1511" y2="271" stroke="rgba(60,80,140,0.12)" stroke-width="1"/><line x1="1523" y1="178" x2="1523" y2="271" stroke="rgba(60,80,140,0.12)" stroke-width="1"/><line x1="1535" y1="178" x2="1535" y2="271" stroke="rgba(60,80,140,0.12)" stroke-width="1"/><line x1="1547" y1="178" x2="1547" y2="271" stroke="rgba(60,80,140,0.12)" stroke-width="1"/><line x1="1559" y1="178" x2="1559" y2="271" stroke="rgba(60,80,140,0.12)" stroke-width="1"/><line x1="1571" y1="178" x2="1571" y2="271" stroke="rgba(60,80,140,0.12)" stroke-width="1"/><line x1="1583" y1="178" x2="1583" y2="271" stroke="rgba(60,80,140,0.12)" stroke-width="1"/><line x1="1595" y1="178" x2="1595" y2="271" stroke="rgba(60,80,140,0.12)" stroke-width="1"/><line x1="1607" y1="178" x2="1607" y2="271" stroke="rgba(60,80,140,0.12)" stroke-width="1"/><line x1="1619" y1="178" x2="1619" y2="271" stroke="rgba(60,80,140,0.12)" stroke-width="1"/><line x1="1631" y1="178" x2="1631" y2="271" stroke="rgba(60,80,140,0.12)" stroke-width="1"/><line x1="1643" y1="178" x2="1643" y2="271" stroke="rgba(60,80,140,0.12)" stroke-width="1"/><line x1="1655" y1="178" x2="1655" y2="271" stroke="rgba(60,80,140,0.12)" stroke-width="1"/><line x1="1667" y1="178" x2="1667" y2="271" stroke="rgba(60,80,140,0.12)" stroke-width="1"/><line x1="1679" y1="178" x2="1679" y2="271" stroke="rgba(60,80,140,0.12)" stroke-width="1"/><line x1="1691" y1="178" x2="1691" y2="271" stroke="rgba(60,80,140,0.12)" stroke-width="1"/><line x1="1703" y1="178" x2="1703" y2="271" stroke="rgba(60,80,140,0.12)" stroke-width="1"/><line x1="1715" y1="178" x2="1715" y2="271" stroke="rgba(60,80,140,0.12)" stroke-width="1"/><line x1="1727" y1="178" x2="1727" y2="271" stroke="rgba(60,80,140,0.12)" stroke-width="1"/><line x1="1739" y1="178" x2="1739" y2="271" stroke="rgba(60,80,140,0.12)" stroke-width="1"/><line x1="1751" y1="178" x2="1751" y2="271" stroke="rgba(60,80,140,0.12)" stroke-width="1"/><line x1="1763" y1="178" x2="1763" y2="271" stroke="rgba(60,80,140,0.12)" stroke-width="1"/><line x1="1775" y1="178" x2="1775" y2="271" stroke="rgba(60,80,140,0.12)" stroke-width="1"/><line x1="1787" y1="178" x2="1787" y2="271" stroke="rgba(60,80,140,0.12)" stroke-width="1"/><line x1="1799" y1="178" x2="1799" y2="271" stroke="rgba(60,80,140,0.12)" stroke-width="1"/><line x1="1811" y1="178" x2="1811" y2="271" stroke="rgba(60,80,140,0.12)" stroke-width="1"/><line x1="1823" y1="178" x2="1823" y2="271" stroke="rgba(60,80,140,0.12)" stroke-width="1"/><line x1="1835" y1="178" x2="1835" y2="271" stroke="rgba(60,80,140,0.12)" stroke-width="1"/><line x1="1847" y1="178" x2="1847" y2="271" stroke="rgba(60,80,140,0.12)" stroke-width="1"/><line x1="1859" y1="178" x2="1859" y2="271" stroke="rgba(60,80,140,0.12)" stroke-width="1"/><line x1="1871" y1="178" x2="1871" y2="271" stroke="rgba(60,80,140,0.12)" stroke-width="1"/><line x1="1883" y1="178" x2="1883" y2="271" stroke="rgba(60,80,140,0.12)" stroke-width="1"/><line x1="1391" y1="182" x2="1884" y2="182" stroke="rgba(60,80,140,0.12)" stroke-width="1"/><line x1="1391" y1="192" x2="1884" y2="192" stroke="rgba(60,80,140,0.12)" stroke-width="1"/><line x1="1391" y1="202" x2="1884" y2="202" stroke="rgba(60,80,140,0.12)" stroke-width="1"/><line x1="1391" y1="212" x2="1884" y2="212" stroke="rgba(60,80,140,0.12)" stroke-width="1"/><line x1="1391" y1="222" x2="1884" y2="222" stroke="rgba(60,80,140,0.12)" stroke-width="1"/><line x1="1391" y1="232" x2="1884" y2="232" stroke="rgba(60,80,140,0.12)" stroke-width="1"/><line x1="1391" y1="242" x2="1884" y2="242" stroke="rgba(60,80,140,0.12)" stroke-width="1"/><line x1="1391" y1="252" x2="1884" y2="252" stroke="rgba(60,80,140,0.12)" stroke-width="1"/><line x1="1391" y1="262" x2="1884" y2="262" stroke="rgba(60,80,140,0.12)" stroke-width="1"/>
<line x1="1391" y1="177.5" x2="1884" y2="177.5" stroke="#1e2858" stroke-width="1"/>
<line x1="1391" y1="224" x2="1884" y2="224" stroke="#2a3868" stroke-width="1.2"/>
<path d="M1391.0,189.20 L1393.0,188.82 L1395.0,188.44 L1397.0,188.07 L1399.0,187.72 L1401.0,187.36 L1403.0,187.02 L1405.0,186.69 L1407.0,186.37 L1409.0,186.05 L1411.0,185.75 L1413.0,185.45 L1415.0,185.17 L1417.0,184.89 L1419.0,184.63 L1421.0,184.38 L1423.0,184.13 L1425.0,183.90 L1427.0,183.68 L1429.0,183.47 L1431.0,183.27 L1433.0,183.08 L1435.0,182.91 L1437.0,182.74 L1439.0,182.59 L1441.0,182.45 L1443.0,182.32 L1445.0,182.20 L1447.0,182.10 L1449.0,182.00 L1451.0,181.92 L1453.0,181.86 L1455.0,181.80 L1457.0,181.76 L1459.0,181.72 L1461.0,181.71 L1463.0,181.70 L1465.0,181.71 L1467.0,181.72 L1469.0,181.76 L1471.0,181.80 L1473.0,181.86 L1475.0,181.92 L1477.0,182.00 L1479.0,182.10 L1481.0,182.20 L1483.0,182.32 L1485.0,182.45 L1487.0,182.59 L1489.0,182.74 L1491.0,182.91 L1493.0,183.08 L1495.0,183.27 L1497.0,183.47 L1499.0,183.68 L1501.0,183.90 L1503.0,184.13 L1505.0,184.38 L1507.0,184.63 L1509.0,184.89 L1511.0,185.17 L1513.0,185.45 L1515.0,185.75 L1517.0,186.05 L1519.0,186.37 L1521.0,186.69 L1523.0,187.02 L1525.0,187.36 L1527.0,187.72 L1529.0,188.07 L1531.0,188.44 L1533.0,188.82 L1535.0,189.20 L1537.0,189.59 L1539.0,189.99 L1541.0,190.39 L1543.0,190.80 L1545.0,191.22 L1547.0,191.64 L1549.0,192.07 L1551.0,192.51 L1553.0,192.95 L1555.0,193.40 L1557.0,193.85 L1559.0,194.30 L1561.0,194.76 L1563.0,195.22 L1565.0,195.69 L1567.0,196.16 L1569.0,196.63 L1571.0,197.11 L1573.0,197.58 L1575.0,198.06 L1577.0,198.54 L1579.0,199.03 L1581.0,199.51 L1583.0,199.99 L1585.0,200.48 L1587.0,200.96 L1589.0,201.45 L1591.0,201.93 L1593.0,202.41 L1595.0,202.90 L1597.0,203.38 L1599.0,203.86 L1601.0,204.33 L1603.0,204.81 L1605.0,205.28 L1607.0,205.74 L1609.0,206.21 L1611.0,206.67 L1613.0,207.13 L1615.0,207.58 L1617.0,208.03 L1619.0,208.47 L1621.0,208.91 L1623.0,209.34 L1625.0,209.77 L1627.0,210.19 L1629.0,210.60 L1631.0,211.01 L1633.0,211.41 L1635.0,211.81 L1637.0,212.19 L1639.0,212.57 L1641.0,212.94 L1643.0,213.31 L1645.0,213.66 L1647.0,214.01 L1649.0,214.34 L1651.0,214.67 L1653.0,214.99 L1655.0,215.30 L1657.0,215.60 L1659.0,215.89 L1661.0,216.17 L1663.0,216.44 L1665.0,216.70 L1667.0,216.95 L1669.0,217.19 L1671.0,217.41 L1673.0,217.63 L1675.0,217.83 L1677.0,218.03 L1679.0,218.21 L1681.0,218.38 L1683.0,218.54 L1685.0,218.68 L1687.0,218.82 L1689.0,218.94 L1691.0,219.05 L1693.0,219.15 L1695.0,219.24 L1697.0,219.31 L1699.0,219.37 L1701.0,219.42 L1703.0,219.46 L1705.0,219.49 L1707.0,219.50 L1709.0,219.50 L1711.0,219.49 L1713.0,219.46 L1715.0,219.42 L1717.0,219.37 L1719.0,219.31 L1721.0,219.24 L1723.0,219.15 L1725.0,219.05 L1727.0,218.94 L1729.0,218.82 L1731.0,218.68 L1733.0,218.54 L1735.0,218.38 L1737.0,218.21 L1739.0,218.03 L1741.0,217.83 L1743.0,217.63 L1745.0,217.41 L1747.0,217.19 L1749.0,216.95 L1751.0,216.70 L1753.0,216.44 L1755.0,216.17 L1757.0,215.89 L1759.0,215.60 L1761.0,215.30 L1763.0,214.99 L1765.0,214.67 L1767.0,214.34 L1769.0,214.01 L1771.0,213.66 L1773.0,213.31 L1775.0,212.94 L1777.0,212.57 L1779.0,212.19 L1781.0,211.81 L1783.0,211.41 L1785.0,211.01 L1787.0,210.60 L1789.0,210.19 L1791.0,209.77 L1793.0,209.34 L1795.0,208.91 L1797.0,208.47 L1799.0,208.03 L1801.0,207.58 L1803.0,207.13 L1805.0,206.67 L1807.0,206.21 L1809.0,205.74 L1811.0,205.28 L1813.0,204.81 L1815.0,204.33 L1817.0,203.86 L1819.0,203.38 L1821.0,202.90 L1823.0,202.41 L1825.0,201.93 L1827.0,201.45 L1829.0,200.96 L1831.0,200.48 L1833.0,199.99 L1835.0,199.51 L1837.0,199.03 L1839.0,198.54 L1841.0,198.06 L1843.0,197.58 L1845.0,197.11 L1847.0,196.63 L1849.0,196.16 L1851.0,195.69 L1853.0,195.22 L1855.0,194.76 L1857.0,194.30 L1859.0,193.85 L1861.0,193.40 L1863.0,192.95 L1865.0,192.51 L1867.0,192.07 L1869.0,191.64 L1871.0,191.22 L1873.0,190.80 L1875.0,190.39 L1877.0,189.99 L1879.0,189.59 L1881.0,189.20 L1883.0,188.82" stroke="rgba(80,190,240,0.25)" stroke-width="4" fill="none"/>
<path d="M1391.0,189.20 L1393.0,188.82 L1395.0,188.44 L1397.0,188.07 L1399.0,187.72 L1401.0,187.36 L1403.0,187.02 L1405.0,186.69 L1407.0,186.37 L1409.0,186.05 L1411.0,185.75 L1413.0,185.45 L1415.0,185.17 L1417.0,184.89 L1419.0,184.63 L1421.0,184.38 L1423.0,184.13 L1425.0,183.90 L1427.0,183.68 L1429.0,183.47 L1431.0,183.27 L1433.0,183.08 L1435.0,182.91 L1437.0,182.74 L1439.0,182.59 L1441.0,182.45 L1443.0,182.32 L1445.0,182.20 L1447.0,182.10 L1449.0,182.00 L1451.0,181.92 L1453.0,181.86 L1455.0,181.80 L1457.0,181.76 L1459.0,181.72 L1461.0,181.71 L1463.0,181.70 L1465.0,181.71 L1467.0,181.72 L1469.0,181.76 L1471.0,181.80 L1473.0,181.86 L1475.0,181.92 L1477.0,182.00 L1479.0,182.10 L1481.0,182.20 L1483.0,182.32 L1485.0,182.45 L1487.0,182.59 L1489.0,182.74 L1491.0,182.91 L1493.0,183.08 L1495.0,183.27 L1497.0,183.47 L1499.0,183.68 L1501.0,183.90 L1503.0,184.13 L1505.0,184.38 L1507.0,184.63 L1509.0,184.89 L1511.0,185.17 L1513.0,185.45 L1515.0,185.75 L1517.0,186.05 L1519.0,186.37 L1521.0,186.69 L1523.0,187.02 L1525.0,187.36 L1527.0,187.72 L1529.0,188.07 L1531.0,188.44 L1533.0,188.82 L1535.0,189.20 L1537.0,189.59 L1539.0,189.99 L1541.0,190.39 L1543.0,190.80 L1545.0,191.22 L1547.0,191.64 L1549.0,192.07 L1551.0,192.51 L1553.0,192.95 L1555.0,193.40 L1557.0,193.85 L1559.0,194.30 L1561.0,194.76 L1563.0,195.22 L1565.0,195.69 L1567.0,196.16 L1569.0,196.63 L1571.0,197.11 L1573.0,197.58 L1575.0,198.06 L1577.0,198.54 L1579.0,199.03 L1581.0,199.51 L1583.0,199.99 L1585.0,200.48 L1587.0,200.96 L1589.0,201.45 L1591.0,201.93 L1593.0,202.41 L1595.0,202.90 L1597.0,203.38 L1599.0,203.86 L1601.0,204.33 L1603.0,204.81 L1605.0,205.28 L1607.0,205.74 L1609.0,206.21 L1611.0,206.67 L1613.0,207.13 L1615.0,207.58 L1617.0,208.03 L1619.0,208.47 L1621.0,208.91 L1623.0,209.34 L1625.0,209.77 L1627.0,210.19 L1629.0,210.60 L1631.0,211.01 L1633.0,211.41 L1635.0,211.81 L1637.0,212.19 L1639.0,212.57 L1641.0,212.94 L1643.0,213.31 L1645.0,213.66 L1647.0,214.01 L1649.0,214.34 L1651.0,214.67 L1653.0,214.99 L1655.0,215.30 L1657.0,215.60 L1659.0,215.89 L1661.0,216.17 L1663.0,216.44 L1665.0,216.70 L1667.0,216.95 L1669.0,217.19 L1671.0,217.41 L1673.0,217.63 L1675.0,217.83 L1677.0,218.03 L1679.0,218.21 L1681.0,218.38 L1683.0,218.54 L1685.0,218.68 L1687.0,218.82 L1689.0,218.94 L1691.0,219.05 L1693.0,219.15 L1695.0,219.24 L1697.0,219.31 L1699.0,219.37 L1701.0,219.42 L1703.0,219.46 L1705.0,219.49 L1707.0,219.50 L1709.0,219.50 L1711.0,219.49 L1713.0,219.46 L1715.0,219.42 L1717.0,219.37 L1719.0,219.31 L1721.0,219.24 L1723.0,219.15 L1725.0,219.05 L1727.0,218.94 L1729.0,218.82 L1731.0,218.68 L1733.0,218.54 L1735.0,218.38 L1737.0,218.21 L1739.0,218.03 L1741.0,217.83 L1743.0,217.63 L1745.0,217.41 L1747.0,217.19 L1749.0,216.95 L1751.0,216.70 L1753.0,216.44 L1755.0,216.17 L1757.0,215.89 L1759.0,215.60 L1761.0,215.30 L1763.0,214.99 L1765.0,214.67 L1767.0,214.34 L1769.0,214.01 L1771.0,213.66 L1773.0,213.31 L1775.0,212.94 L1777.0,212.57 L1779.0,212.19 L1781.0,211.81 L1783.0,211.41 L1785.0,211.01 L1787.0,210.60 L1789.0,210.19 L1791.0,209.77 L1793.0,209.34 L1795.0,208.91 L1797.0,208.47 L1799.0,208.03 L1801.0,207.58 L1803.0,207.13 L1805.0,206.67 L1807.0,206.21 L1809.0,205.74 L1811.0,205.28 L1813.0,204.81 L1815.0,204.33 L1817.0,203.86 L1819.0,203.38 L1821.0,202.90 L1823.0,202.41 L1825.0,201.93 L1827.0,201.45 L1829.0,200.96 L1831.0,200.48 L1833.0,199.99 L1835.0,199.51 L1837.0,199.03 L1839.0,198.54 L1841.0,198.06 L1843.0,197.58 L1845.0,197.11 L1847.0,196.63 L1849.0,196.16 L1851.0,195.69 L1853.0,195.22 L1855.0,194.76 L1857.0,194.30 L1859.0,193.85 L1861.0,193.40 L1863.0,192.95 L1865.0,192.51 L1867.0,192.07 L1869.0,191.64 L1871.0,191.22 L1873.0,190.80 L1875.0,190.39 L1877.0,189.99 L1879.0,189.59 L1881.0,189.20 L1883.0,188.82" stroke="#5ac0ee" stroke-width="1.5" fill="none"/>
<path d="M1391.0,256.36 L1392.0,256.57 L1393.0,256.60 L1394.0,256.60 L1395.0,256.60 L1396.0,256.60 L1397.0,256.60 L1398.0,256.60 L1399.0,256.60 L1400.0,256.60 L1401.0,256.60 L1402.0,256.60 L1403.0,256.60 L1404.0,256.60 L1405.0,256.60 L1406.0,256.60 L1407.0,256.60 L1408.0,256.60 L1409.0,256.60 L1410.0,256.60 L1411.0,256.60 L1412.0,256.60 L1413.0,256.60 L1414.0,256.60 L1415.0,256.60 L1416.0,256.60 L1417.0,256.60 L1418.0,256.60 L1419.0,256.60 L1420.0,256.60 L1421.0,256.60 L1422.0,256.60 L1423.0,256.60 L1424.0,256.60 L1425.0,256.60 L1426.0,256.60 L1427.0,256.60 L1428.0,256.57 L1429.0,256.36 L1430.0,256.16 L1431.0,255.95 L1432.0,255.75 L1433.0,255.55 L1434.0,255.34 L1435.0,255.14 L1436.0,254.94 L1437.0,254.73 L1438.0,254.53 L1439.0,254.32 L1440.0,254.12 L1441.0,253.92 L1442.0,253.71 L1443.0,253.51 L1444.0,253.31 L1445.0,253.10 L1446.0,252.90 L1447.0,252.69 L1448.0,252.49 L1449.0,252.29 L1450.0,252.08 L1451.0,251.88 L1452.0,251.67 L1453.0,251.47 L1454.0,251.27 L1455.0,251.06 L1456.0,250.86 L1457.0,250.66 L1458.0,250.45 L1459.0,250.25 L1460.0,250.04 L1461.0,249.84 L1462.0,249.64 L1463.0,249.43 L1464.0,249.23 L1465.0,249.02 L1466.0,248.82 L1467.0,248.62 L1468.0,248.41 L1469.0,248.21 L1470.0,248.01 L1471.0,247.80 L1472.0,247.60 L1473.0,247.39 L1474.0,247.19 L1475.0,246.99 L1476.0,246.78 L1477.0,246.58 L1478.0,246.38 L1479.0,246.17 L1480.0,245.97 L1481.0,245.76 L1482.0,245.56 L1483.0,245.36 L1484.0,245.15 L1485.0,244.95 L1486.0,244.74 L1487.0,244.54 L1488.0,244.34 L1489.0,244.13 L1490.0,243.93 L1491.0,243.73 L1492.0,243.52 L1493.0,243.32 L1494.0,243.11 L1495.0,242.91 L1496.0,242.71 L1497.0,242.50 L1498.0,242.30 L1499.0,242.09 L1500.0,241.89 L1501.0,241.69 L1502.0,241.48 L1503.0,241.28 L1504.0,241.08 L1505.0,240.87 L1506.0,240.67 L1507.0,240.46 L1508.0,240.26 L1509.0,240.06 L1510.0,239.85 L1511.0,239.65 L1512.0,239.45 L1513.0,239.24 L1514.0,239.04 L1515.0,238.83 L1516.0,238.80 L1517.0,238.80 L1518.0,238.80 L1519.0,238.80 L1520.0,238.80 L1521.0,238.80 L1522.0,238.80 L1523.0,238.80 L1524.0,238.80 L1525.0,238.80 L1526.0,238.80 L1527.0,238.80 L1528.0,238.80 L1529.0,238.80 L1530.0,238.80 L1531.0,238.80 L1532.0,238.80 L1533.0,238.80 L1534.0,238.80 L1535.0,238.80 L1536.0,238.80 L1537.0,238.80 L1538.0,238.80 L1539.0,238.80 L1540.0,238.80 L1541.0,238.80 L1542.0,238.80 L1543.0,238.80 L1544.0,238.80 L1545.0,238.80 L1546.0,238.80 L1547.0,238.80 L1548.0,238.80 L1549.0,238.80 L1550.0,238.80 L1551.0,238.83 L1552.0,239.04 L1553.0,239.24 L1554.0,239.45 L1555.0,239.65 L1556.0,239.85 L1557.0,240.06 L1558.0,240.26 L1559.0,240.46 L1560.0,240.67 L1561.0,240.87 L1562.0,241.08 L1563.0,241.28 L1564.0,241.48 L1565.0,241.69 L1566.0,241.89 L1567.0,242.09 L1568.0,242.30 L1569.0,242.50 L1570.0,242.71 L1571.0,242.91 L1572.0,243.11 L1573.0,243.32 L1574.0,243.52 L1575.0,243.73 L1576.0,243.93 L1577.0,244.13 L1578.0,244.34 L1579.0,244.54 L1580.0,244.74 L1581.0,244.95 L1582.0,245.15 L1583.0,245.36 L1584.0,245.56 L1585.0,245.76 L1586.0,245.97 L1587.0,246.17 L1588.0,246.38 L1589.0,246.58 L1590.0,246.78 L1591.0,246.99 L1592.0,247.19 L1593.0,247.39 L1594.0,247.60 L1595.0,247.80 L1596.0,248.01 L1597.0,248.21 L1598.0,248.41 L1599.0,248.62 L1600.0,248.82 L1601.0,249.02 L1602.0,249.23 L1603.0,249.43 L1604.0,249.64 L1605.0,249.84 L1606.0,250.04 L1607.0,250.25 L1608.0,250.45 L1609.0,250.66 L1610.0,250.86 L1611.0,251.06 L1612.0,251.27 L1613.0,251.47 L1614.0,251.67 L1615.0,251.88 L1616.0,252.08 L1617.0,252.29 L1618.0,252.49 L1619.0,252.69 L1620.0,252.90 L1621.0,253.10 L1622.0,253.31 L1623.0,253.51 L1624.0,253.71 L1625.0,253.92 L1626.0,254.12 L1627.0,254.32 L1628.0,254.53 L1629.0,254.73 L1630.0,254.94 L1631.0,255.14 L1632.0,255.34 L1633.0,255.55 L1634.0,255.75 L1635.0,255.95 L1636.0,256.16 L1637.0,256.36 L1638.0,256.57 L1639.0,256.60 L1640.0,256.60 L1641.0,256.60 L1642.0,256.60 L1643.0,256.60 L1644.0,256.60 L1645.0,256.60 L1646.0,256.60 L1647.0,256.60 L1648.0,256.60 L1649.0,256.60 L1650.0,256.60 L1651.0,256.60 L1652.0,256.60 L1653.0,256.60 L1654.0,256.60 L1655.0,256.60 L1656.0,256.60 L1657.0,256.60 L1658.0,256.60 L1659.0,256.60 L1660.0,256.60 L1661.0,256.60 L1662.0,256.60 L1663.0,256.60 L1664.0,256.60 L1665.0,256.60 L1666.0,256.60 L1667.0,256.60 L1668.0,256.60 L1669.0,256.60 L1670.0,256.60 L1671.0,256.60 L1672.0,256.60 L1673.0,256.60 L1674.0,256.57 L1675.0,256.36 L1676.0,256.16 L1677.0,255.95 L1678.0,255.75 L1679.0,255.55 L1680.0,255.34 L1681.0,255.14 L1682.0,254.94 L1683.0,254.73 L1684.0,254.53 L1685.0,254.32 L1686.0,254.12 L1687.0,253.92 L1688.0,253.71 L1689.0,253.51 L1690.0,253.31 L1691.0,253.10 L1692.0,252.90 L1693.0,252.69 L1694.0,252.49 L1695.0,252.29 L1696.0,252.08 L1697.0,251.88 L1698.0,251.67 L1699.0,251.47 L1700.0,251.27 L1701.0,251.06 L1702.0,250.86 L1703.0,250.66 L1704.0,250.45 L1705.0,250.25 L1706.0,250.04 L1707.0,249.84 L1708.0,249.64 L1709.0,249.43 L1710.0,249.23 L1711.0,249.02 L1712.0,248.82 L1713.0,248.62 L1714.0,248.41 L1715.0,248.21 L1716.0,248.01 L1717.0,247.80 L1718.0,247.60 L1719.0,247.39 L1720.0,247.19 L1721.0,246.99 L1722.0,246.78 L1723.0,246.58 L1724.0,246.38 L1725.0,246.17 L1726.0,245.97 L1727.0,245.76 L1728.0,245.56 L1729.0,245.36 L1730.0,245.15 L1731.0,244.95 L1732.0,244.74 L1733.0,244.54 L1734.0,244.34 L1735.0,244.13 L1736.0,243.93 L1737.0,243.73 L1738.0,243.52 L1739.0,243.32 L1740.0,243.11 L1741.0,242.91 L1742.0,242.71 L1743.0,242.50 L1744.0,242.30 L1745.0,242.09 L1746.0,241.89 L1747.0,241.69 L1748.0,241.48 L1749.0,241.28 L1750.0,241.08 L1751.0,240.87 L1752.0,240.67 L1753.0,240.46 L1754.0,240.26 L1755.0,240.06 L1756.0,239.85 L1757.0,239.65 L1758.0,239.45 L1759.0,239.24 L1760.0,239.04 L1761.0,238.83 L1762.0,238.80 L1763.0,238.80 L1764.0,238.80 L1765.0,238.80 L1766.0,238.80 L1767.0,238.80 L1768.0,238.80 L1769.0,238.80 L1770.0,238.80 L1771.0,238.80 L1772.0,238.80 L1773.0,238.80 L1774.0,238.80 L1775.0,238.80 L1776.0,238.80 L1777.0,238.80 L1778.0,238.80 L1779.0,238.80 L1780.0,238.80 L1781.0,238.80 L1782.0,238.80 L1783.0,238.80 L1784.0,238.80 L1785.0,238.80 L1786.0,238.80 L1787.0,238.80 L1788.0,238.80 L1789.0,238.80 L1790.0,238.80 L1791.0,238.80 L1792.0,238.80 L1793.0,238.80 L1794.0,238.80 L1795.0,238.80 L1796.0,238.80 L1797.0,238.83 L1798.0,239.04 L1799.0,239.24 L1800.0,239.45 L1801.0,239.65 L1802.0,239.85 L1803.0,240.06 L1804.0,240.26 L1805.0,240.46 L1806.0,240.67 L1807.0,240.87 L1808.0,241.08 L1809.0,241.28 L1810.0,241.48 L1811.0,241.69 L1812.0,241.89 L1813.0,242.09 L1814.0,242.30 L1815.0,242.50 L1816.0,242.71 L1817.0,242.91 L1818.0,243.11 L1819.0,243.32 L1820.0,243.52 L1821.0,243.73 L1822.0,243.93 L1823.0,244.13 L1824.0,244.34 L1825.0,244.54 L1826.0,244.74 L1827.0,244.95 L1828.0,245.15 L1829.0,245.36 L1830.0,245.56 L1831.0,245.76 L1832.0,245.97 L1833.0,246.17 L1834.0,246.38 L1835.0,246.58 L1836.0,246.78 L1837.0,246.99 L1838.0,247.19 L1839.0,247.39 L1840.0,247.60 L1841.0,247.80 L1842.0,248.01 L1843.0,248.21 L1844.0,248.41 L1845.0,248.62 L1846.0,248.82 L1847.0,249.02 L1848.0,249.23 L1849.0,249.43 L1850.0,249.64 L1851.0,249.84 L1852.0,250.04 L1853.0,250.25 L1854.0,250.45 L1855.0,250.66 L1856.0,250.86 L1857.0,251.06 L1858.0,251.27 L1859.0,251.47 L1860.0,251.67 L1861.0,251.88 L1862.0,252.08 L1863.0,252.29 L1864.0,252.49 L1865.0,252.69 L1866.0,252.90 L1867.0,253.10 L1868.0,253.31 L1869.0,253.51 L1870.0,253.71 L1871.0,253.92 L1872.0,254.12 L1873.0,254.32 L1874.0,254.53 L1875.0,254.73 L1876.0,254.94 L1877.0,255.14 L1878.0,255.34 L1879.0,255.55 L1880.0,255.75 L1881.0,255.95 L1882.0,256.16 L1883.0,256.36 L1884.0,256.57" stroke="rgba(180,50,220,0.3)" stroke-width="4" fill="none"/>
<path d="M1391.0,256.36 L1392.0,256.57 L1393.0,256.60 L1394.0,256.60 L1395.0,256.60 L1396.0,256.60 L1397.0,256.60 L1398.0,256.60 L1399.0,256.60 L1400.0,256.60 L1401.0,256.60 L1402.0,256.60 L1403.0,256.60 L1404.0,256.60 L1405.0,256.60 L1406.0,256.60 L1407.0,256.60 L1408.0,256.60 L1409.0,256.60 L1410.0,256.60 L1411.0,256.60 L1412.0,256.60 L1413.0,256.60 L1414.0,256.60 L1415.0,256.60 L1416.0,256.60 L1417.0,256.60 L1418.0,256.60 L1419.0,256.60 L1420.0,256.60 L1421.0,256.60 L1422.0,256.60 L1423.0,256.60 L1424.0,256.60 L1425.0,256.60 L1426.0,256.60 L1427.0,256.60 L1428.0,256.57 L1429.0,256.36 L1430.0,256.16 L1431.0,255.95 L1432.0,255.75 L1433.0,255.55 L1434.0,255.34 L1435.0,255.14 L1436.0,254.94 L1437.0,254.73 L1438.0,254.53 L1439.0,254.32 L1440.0,254.12 L1441.0,253.92 L1442.0,253.71 L1443.0,253.51 L1444.0,253.31 L1445.0,253.10 L1446.0,252.90 L1447.0,252.69 L1448.0,252.49 L1449.0,252.29 L1450.0,252.08 L1451.0,251.88 L1452.0,251.67 L1453.0,251.47 L1454.0,251.27 L1455.0,251.06 L1456.0,250.86 L1457.0,250.66 L1458.0,250.45 L1459.0,250.25 L1460.0,250.04 L1461.0,249.84 L1462.0,249.64 L1463.0,249.43 L1464.0,249.23 L1465.0,249.02 L1466.0,248.82 L1467.0,248.62 L1468.0,248.41 L1469.0,248.21 L1470.0,248.01 L1471.0,247.80 L1472.0,247.60 L1473.0,247.39 L1474.0,247.19 L1475.0,246.99 L1476.0,246.78 L1477.0,246.58 L1478.0,246.38 L1479.0,246.17 L1480.0,245.97 L1481.0,245.76 L1482.0,245.56 L1483.0,245.36 L1484.0,245.15 L1485.0,244.95 L1486.0,244.74 L1487.0,244.54 L1488.0,244.34 L1489.0,244.13 L1490.0,243.93 L1491.0,243.73 L1492.0,243.52 L1493.0,243.32 L1494.0,243.11 L1495.0,242.91 L1496.0,242.71 L1497.0,242.50 L1498.0,242.30 L1499.0,242.09 L1500.0,241.89 L1501.0,241.69 L1502.0,241.48 L1503.0,241.28 L1504.0,241.08 L1505.0,240.87 L1506.0,240.67 L1507.0,240.46 L1508.0,240.26 L1509.0,240.06 L1510.0,239.85 L1511.0,239.65 L1512.0,239.45 L1513.0,239.24 L1514.0,239.04 L1515.0,238.83 L1516.0,238.80 L1517.0,238.80 L1518.0,238.80 L1519.0,238.80 L1520.0,238.80 L1521.0,238.80 L1522.0,238.80 L1523.0,238.80 L1524.0,238.80 L1525.0,238.80 L1526.0,238.80 L1527.0,238.80 L1528.0,238.80 L1529.0,238.80 L1530.0,238.80 L1531.0,238.80 L1532.0,238.80 L1533.0,238.80 L1534.0,238.80 L1535.0,238.80 L1536.0,238.80 L1537.0,238.80 L1538.0,238.80 L1539.0,238.80 L1540.0,238.80 L1541.0,238.80 L1542.0,238.80 L1543.0,238.80 L1544.0,238.80 L1545.0,238.80 L1546.0,238.80 L1547.0,238.80 L1548.0,238.80 L1549.0,238.80 L1550.0,238.80 L1551.0,238.83 L1552.0,239.04 L1553.0,239.24 L1554.0,239.45 L1555.0,239.65 L1556.0,239.85 L1557.0,240.06 L1558.0,240.26 L1559.0,240.46 L1560.0,240.67 L1561.0,240.87 L1562.0,241.08 L1563.0,241.28 L1564.0,241.48 L1565.0,241.69 L1566.0,241.89 L1567.0,242.09 L1568.0,242.30 L1569.0,242.50 L1570.0,242.71 L1571.0,242.91 L1572.0,243.11 L1573.0,243.32 L1574.0,243.52 L1575.0,243.73 L1576.0,243.93 L1577.0,244.13 L1578.0,244.34 L1579.0,244.54 L1580.0,244.74 L1581.0,244.95 L1582.0,245.15 L1583.0,245.36 L1584.0,245.56 L1585.0,245.76 L1586.0,245.97 L1587.0,246.17 L1588.0,246.38 L1589.0,246.58 L1590.0,246.78 L1591.0,246.99 L1592.0,247.19 L1593.0,247.39 L1594.0,247.60 L1595.0,247.80 L1596.0,248.01 L1597.0,248.21 L1598.0,248.41 L1599.0,248.62 L1600.0,248.82 L1601.0,249.02 L1602.0,249.23 L1603.0,249.43 L1604.0,249.64 L1605.0,249.84 L1606.0,250.04 L1607.0,250.25 L1608.0,250.45 L1609.0,250.66 L1610.0,250.86 L1611.0,251.06 L1612.0,251.27 L1613.0,251.47 L1614.0,251.67 L1615.0,251.88 L1616.0,252.08 L1617.0,252.29 L1618.0,252.49 L1619.0,252.69 L1620.0,252.90 L1621.0,253.10 L1622.0,253.31 L1623.0,253.51 L1624.0,253.71 L1625.0,253.92 L1626.0,254.12 L1627.0,254.32 L1628.0,254.53 L1629.0,254.73 L1630.0,254.94 L1631.0,255.14 L1632.0,255.34 L1633.0,255.55 L1634.0,255.75 L1635.0,255.95 L1636.0,256.16 L1637.0,256.36 L1638.0,256.57 L1639.0,256.60 L1640.0,256.60 L1641.0,256.60 L1642.0,256.60 L1643.0,256.60 L1644.0,256.60 L1645.0,256.60 L1646.0,256.60 L1647.0,256.60 L1648.0,256.60 L1649.0,256.60 L1650.0,256.60 L1651.0,256.60 L1652.0,256.60 L1653.0,256.60 L1654.0,256.60 L1655.0,256.60 L1656.0,256.60 L1657.0,256.60 L1658.0,256.60 L1659.0,256.60 L1660.0,256.60 L1661.0,256.60 L1662.0,256.60 L1663.0,256.60 L1664.0,256.60 L1665.0,256.60 L1666.0,256.60 L1667.0,256.60 L1668.0,256.60 L1669.0,256.60 L1670.0,256.60 L1671.0,256.60 L1672.0,256.60 L1673.0,256.60 L1674.0,256.57 L1675.0,256.36 L1676.0,256.16 L1677.0,255.95 L1678.0,255.75 L1679.0,255.55 L1680.0,255.34 L1681.0,255.14 L1682.0,254.94 L1683.0,254.73 L1684.0,254.53 L1685.0,254.32 L1686.0,254.12 L1687.0,253.92 L1688.0,253.71 L1689.0,253.51 L1690.0,253.31 L1691.0,253.10 L1692.0,252.90 L1693.0,252.69 L1694.0,252.49 L1695.0,252.29 L1696.0,252.08 L1697.0,251.88 L1698.0,251.67 L1699.0,251.47 L1700.0,251.27 L1701.0,251.06 L1702.0,250.86 L1703.0,250.66 L1704.0,250.45 L1705.0,250.25 L1706.0,250.04 L1707.0,249.84 L1708.0,249.64 L1709.0,249.43 L1710.0,249.23 L1711.0,249.02 L1712.0,248.82 L1713.0,248.62 L1714.0,248.41 L1715.0,248.21 L1716.0,248.01 L1717.0,247.80 L1718.0,247.60 L1719.0,247.39 L1720.0,247.19 L1721.0,246.99 L1722.0,246.78 L1723.0,246.58 L1724.0,246.38 L1725.0,246.17 L1726.0,245.97 L1727.0,245.76 L1728.0,245.56 L1729.0,245.36 L1730.0,245.15 L1731.0,244.95 L1732.0,244.74 L1733.0,244.54 L1734.0,244.34 L1735.0,244.13 L1736.0,243.93 L1737.0,243.73 L1738.0,243.52 L1739.0,243.32 L1740.0,243.11 L1741.0,242.91 L1742.0,242.71 L1743.0,242.50 L1744.0,242.30 L1745.0,242.09 L1746.0,241.89 L1747.0,241.69 L1748.0,241.48 L1749.0,241.28 L1750.0,241.08 L1751.0,240.87 L1752.0,240.67 L1753.0,240.46 L1754.0,240.26 L1755.0,240.06 L1756.0,239.85 L1757.0,239.65 L1758.0,239.45 L1759.0,239.24 L1760.0,239.04 L1761.0,238.83 L1762.0,238.80 L1763.0,238.80 L1764.0,238.80 L1765.0,238.80 L1766.0,238.80 L1767.0,238.80 L1768.0,238.80 L1769.0,238.80 L1770.0,238.80 L1771.0,238.80 L1772.0,238.80 L1773.0,238.80 L1774.0,238.80 L1775.0,238.80 L1776.0,238.80 L1777.0,238.80 L1778.0,238.80 L1779.0,238.80 L1780.0,238.80 L1781.0,238.80 L1782.0,238.80 L1783.0,238.80 L1784.0,238.80 L1785.0,238.80 L1786.0,238.80 L1787.0,238.80 L1788.0,238.80 L1789.0,238.80 L1790.0,238.80 L1791.0,238.80 L1792.0,238.80 L1793.0,238.80 L1794.0,238.80 L1795.0,238.80 L1796.0,238.80 L1797.0,238.83 L1798.0,239.04 L1799.0,239.24 L1800.0,239.45 L1801.0,239.65 L1802.0,239.85 L1803.0,240.06 L1804.0,240.26 L1805.0,240.46 L1806.0,240.67 L1807.0,240.87 L1808.0,241.08 L1809.0,241.28 L1810.0,241.48 L1811.0,241.69 L1812.0,241.89 L1813.0,242.09 L1814.0,242.30 L1815.0,242.50 L1816.0,242.71 L1817.0,242.91 L1818.0,243.11 L1819.0,243.32 L1820.0,243.52 L1821.0,243.73 L1822.0,243.93 L1823.0,244.13 L1824.0,244.34 L1825.0,244.54 L1826.0,244.74 L1827.0,244.95 L1828.0,245.15 L1829.0,245.36 L1830.0,245.56 L1831.0,245.76 L1832.0,245.97 L1833.0,246.17 L1834.0,246.38 L1835.0,246.58 L1836.0,246.78 L1837.0,246.99 L1838.0,247.19 L1839.0,247.39 L1840.0,247.60 L1841.0,247.80 L1842.0,248.01 L1843.0,248.21 L1844.0,248.41 L1845.0,248.62 L1846.0,248.82 L1847.0,249.02 L1848.0,249.23 L1849.0,249.43 L1850.0,249.64 L1851.0,249.84 L1852.0,250.04 L1853.0,250.25 L1854.0,250.45 L1855.0,250.66 L1856.0,250.86 L1857.0,251.06 L1858.0,251.27 L1859.0,251.47 L1860.0,251.67 L1861.0,251.88 L1862.0,252.08 L1863.0,252.29 L1864.0,252.49 L1865.0,252.69 L1866.0,252.90 L1867.0,253.10 L1868.0,253.31 L1869.0,253.51 L1870.0,253.71 L1871.0,253.92 L1872.0,254.12 L1873.0,254.32 L1874.0,254.53 L1875.0,254.73 L1876.0,254.94 L1877.0,255.14 L1878.0,255.34 L1879.0,255.55 L1880.0,255.75 L1881.0,255.95 L1882.0,256.16 L1883.0,256.36 L1884.0,256.57" stroke="#b435dc" stroke-width="2.2" fill="none"/>
<rect x="1625" y="259" width="24" height="12" rx="3" fill="#111838" stroke="#1e2858"/>
<path d="M1635.5 263 h3 M1635.5 265 h3 M1635.5 267 h3" stroke="#6a7498" stroke-width="0.8"/>
<path d="M1402 184 L1405 187 M1403.5 183 A1 1 0 1 1 1403.6 183" stroke="#b070e0" stroke-width="1.4" fill="none"/>
<path d="M1400 229.5 L1405.5 235" stroke="#c8c8d8" stroke-width="2"/>
</svg>
<div class="t" style="left:1398.7px;top:158px;font-size:7.8px;color:#c8cce0;font-weight:bold;letter-spacing:-0.1px">Live Wave Preview</div>
<div class="t" style="left:1409px;top:183.2px;font-size:7.5px;color:#f0f0f8;font-weight:bold">Position</div>
<div class="t" style="left:1398px;top:192.5px;font-size:6px;color:#6a38a4">Sine</div>
<div class="t" style="left:1409px;top:229.7px;font-size:7.5px;color:#f0f0f8;font-weight:bold">Scale</div>
<div class="t" style="left:1398px;top:239px;font-size:6px;color:#6a38a4">Sine</div>
<div class="a" style="left:1812.3px;top:153.4px;width:18.5px;height:17px;border-radius:4px;background:#18204a"></div>
<div class="a" style="left:1834px;top:153.4px;width:19px;height:17px;border-radius:4px;background:#18204a"></div>
<div class="a" style="left:1856.5px;top:153.4px;width:19.5px;height:17px;border-radius:4px;background:#18204a"></div>
<svg class="a" style="left:1812px;top:153px" width="66" height="18"><path d="M5.5 7 A3.8 3.8 0 1 0 8.5 5.2" stroke="#d8dcea" fill="none" stroke-width="1.2"/><path d="M5 4.5 L5.3 7.5 L8.2 7" stroke="#d8dcea" fill="none" stroke-width="1.1"/>
<rect x="29.5" y="5.5" width="1.8" height="6" fill="#e0e4f0"/><rect x="33" y="5.5" width="1.8" height="6" fill="#e0e4f0"/>
<path d="M52 7.5 L54.5 10 L57 7.5" stroke="#c8cce0" fill="none" stroke-width="1.2"/></svg>


<!-- card 2 -->
<div class="a" style="left:1390px;top:282.3px;width:494.5px;height:45.3px;border-radius:6px;background:#10173a;border:1px solid #182050"></div>
<div class="a" style="left:1403px;top:300.5px;width:5px;height:6px;background:#7a9a80"></div><div class="a" style="left:1406px;top:302.5px;width:5px;height:6px;background:#5a80c8"></div>
<div class="t" style="left:1415.7px;top:300.5px;font-size:8.9px;color:#f0f2fa;font-weight:bold;letter-spacing:-0.1px">Enable Multi-Layer Wave</div>
<div class="a" style="left:1843.4px;top:297px;width:30.5px;height:16px;border-radius:8px;background:linear-gradient(90deg,#2ab4f4,#6a8af0 60%,#8a6af0)"></div><div class="a" style="left:1859.4px;top:298.8px;width:12.5px;height:12.5px;border-radius:50%;background:#fff"></div>
<!-- card 3 -->
<div class="a" style="left:1390px;top:335px;width:494.5px;height:134.4px;border-radius:6px;background:#10173a;border:1px solid #182050"></div>
<div class="a" style="left:1402.5px;top:348.5px;width:5px;height:6px;background:#7a9a80"></div><div class="a" style="left:1405.5px;top:350.5px;width:5px;height:6px;background:#5a80c8"></div>
<div class="t" style="left:1414.2px;top:348.8px;font-size:8.5px;color:#c8cce0;font-weight:bold;letter-spacing:-0.1px">Multi-Layer Settings</div>
<div class="t" style="left:1401px;top:375px;font-size:8.3px;color:#b0b8d0">Layer Order</div>
<div class="a" style="left:1458.2px;top:366.3px;width:415.8px;height:24.7px;border-radius:4px;background:#19214a;border:1px solid #1e2858"></div>
<div class="t" style="left:1469.5px;top:374.5px;font-size:9.2px;color:#f0f2fa;letter-spacing:-0.2px">Top to Bottom</div>
<div class="t" style="left:1401px;top:400.8px;font-size:8.3px;color:#b0b8d0">Wave</div>
<div class="t" style="left:1401px;top:413px;font-size:8.3px;color:#b0b8d0">Pattern</div>
<div class="a" style="left:1458.2px;top:398px;width:415.8px;height:24.9px;border-radius:4px;background:#19214a;border:1px solid #1e2858"></div>
<div class="t" style="left:1469.5px;top:406.3px;font-size:9.2px;color:#f0f2fa;letter-spacing:-0.2px">Sequential</div>
<svg class="a" style="left:1862px;top:373px" width="12" height="45"><path d="M3 4.5 L5.5 7 L8 4.5" stroke="#e8ecf8" stroke-width="1.5" fill="none"/><path d="M3 36.5 L5.5 39 L8 36.5" stroke="#e8ecf8" stroke-width="1.5" fill="none"/></svg>
<div class="t" style="left:1401px;top:437.5px;font-size:8.3px;color:#b0b8d0">Layer Delay</div>
<div class="a" style="left:1458.2px;top:430.6px;width:44.4px;height:21.2px;border-radius:4px;background:linear-gradient(120deg,#2cc8f8,#5a9af0 50%,#9a5af0);box-shadow:0 0 4px rgba(80,120,240,0.35)"></div><div class="t" style="left:1469px;top:438.20000000000005px;font-size:7px;font-family:'Liberation Mono',monospace;font-weight:bold;color:#f4f4ff">5</div>
<div class="t" style="left:1509.7px;top:437px;font-size:7.4px;color:#56608a">frames</div>
<!-- card 4 -->
<div class="a" style="left:1390px;top:477.3px;width:494.5px;height:147.3px;border-radius:6px;background:#10173a;border:1px solid #182050"></div>
<div class="a" style="left:1402.5px;top:489px;width:8.5px;height:8.5px;background:#5a6a98;border:1px solid #7a8ab8"></div>
<div class="t" style="left:1414.2px;top:489.8px;font-size:8.3px;color:#c8cce0;font-weight:bold;letter-spacing:-0.1px">Progression</div>
<div class="t" style="left:1401px;top:514.8px;font-size:8.6px;color:#f0f2fa;font-weight:bold;letter-spacing:-0.1px">Amplitude Progression</div>
<div class="a" style="left:1843.4px;top:511.9px;width:30.5px;height:16px;border-radius:8px;background:linear-gradient(90deg,#2ab4f4,#6a8af0 60%,#8a6af0)"></div><div class="a" style="left:1859.4px;top:513.6999999999999px;width:12.5px;height:12.5px;border-radius:50%;background:#fff"></div>
<div class="t" style="left:1401px;top:538.8px;font-size:8.3px;color:#b0b8d0">Factor</div>
<div class="a" style="left:1458.2px;top:532px;width:44.4px;height:21.2px;border-radius:4px;background:linear-gradient(120deg,#2cc8f8,#5a9af0 50%,#9a5af0);box-shadow:0 0 4px rgba(80,120,240,0.35)"></div><div class="t" style="left:1469px;top:539.6px;font-size:7px;font-family:'Liberation Mono',monospace;font-weight:bold;color:#f4f4ff">0.9</div>
<div class="t" style="left:1401px;top:568.4px;font-size:8.6px;color:#f0f2fa;font-weight:bold;letter-spacing:-0.1px">Frequency Progression</div>
<div class="a" style="left:1843.4px;top:565px;width:30.5px;height:16px;border-radius:8px;background:#131b40"></div><div class="a" style="left:1844.9px;top:566.8px;width:12.5px;height:12.5px;border-radius:50%;background:#fff"></div>
<div class="t" style="left:1401px;top:591.7px;font-size:8.3px;color:#b0b8d0">Factor</div>
<div class="a" style="left:1458.2px;top:585px;width:44.4px;height:21.2px;border-radius:4px;background:linear-gradient(120deg,#2cc8f8,#5a9af0 50%,#9a5af0);box-shadow:0 0 4px rgba(80,120,240,0.35)"></div><div class="t" style="left:1469px;top:592.6px;font-size:7px;font-family:'Liberation Mono',monospace;font-weight:bold;color:#f4f4ff">1.1</div>
<!-- footer -->
<div class="a" style="left:1380px;top:739px;width:514.5px;height:48.2px;background:#0b1130;border-top:1px solid #121940"></div>
<div class="a" style="left:1390.2px;top:748.1px;width:243.6px;height:24.9px;border-radius:4px;background:linear-gradient(90deg,#22d0f8,#30c4f8 20%,#6a9cf0 45%,#8a78f0 65%,#9860f0 80%,#9a5cf0);box-shadow:0 0 6px rgba(100,120,240,0.4)"></div>
<svg class="a" style="left:1493px;top:755px" width="10" height="11"><path d="M5 1 L6 4 L9 5 L6 6 L5 9.5 L4 6 L1 5 L4 4 Z" fill="#c0c8d8" opacity="0.8"/></svg>
<div class="t" style="left:1508.3px;top:756.6px;font-size:8.8px;color:#fff;font-weight:bold">Apply</div>
<div class="a" style="left:1641px;top:748.1px;width:243.5px;height:24.9px;border-radius:4px;background:#151e46;border:1px solid #283666"></div>
<svg class="a" style="left:1717px;top:755px" width="10" height="11"><path d="M1.5 2 H8.5 M2.5 3 L3 10 H7 L7.5 3 Z" stroke="#a0a8c0" fill="#8a92aa" stroke-width="1"/></svg>
<div class="t" style="left:1732.4px;top:757.8px;font-size:8px;color:#f0f2fa;font-weight:bold;letter-spacing:-0.2px">Remove Expressions</div>
<div class="a" style="left:1380px;top:787.2px;width:514.5px;height:31.3px;background:#0d1333;border-top:1px solid #151c44"></div>
<div class="a" style="left:1390.8px;top:799.5px;width:4.5px;height:4.5px;border-radius:50%;border:1px solid #6a7490"></div>
<div class="t" style="left:1403.8px;top:799px;font-size:7.8px;color:#7ab4ec;font-weight:bold">Ready</div>
<div class="t" style="left:1638px;top:799.8px;font-size:7px;color:#c8ccd8">OAA</div>
<div class="t" style="left:1865px;top:799px;font-size:7.2px;color:#6e7894">v1.0.0</div>


<!-- timeline -->
<div class="a" style="left:0;top:818.5px;width:1897px;height:261.5px;background:#1e1e1e"></div>
<div class="a" style="left:566px;top:837px;width:1327px;height:231px;background:#1b1b1b"></div>
<div class="a" style="left:568px;top:987px;width:135px;height:81px;background:#222"></div>
<div class="a" style="left:0.5px;top:820.3px;width:1893.5px;height:259.7px;border:1.3px solid #4a6890;border-top-width:1.5px"></div>
<div class="t" style="left:8px;top:825px;font-size:7px;color:#888">×</div>
<div class="a" style="left:16px;top:824.5px;width:7px;height:7px;background:#bbb"></div>
<div class="t" style="left:29.8px;top:825px;font-size:7.2px;color:#e6e6e6;letter-spacing:-0.2px">Comp 1</div>
<div class="a" style="left:60px;top:826px;width:5px;height:1px;background:#999;box-shadow:0 2px 0 #999,0 4px 0 #999"></div>
<div class="a" style="left:7px;top:834.2px;width:59px;height:1.3px;background:#dcdcdc"></div>
<div class="t" style="left:89px;top:825px;font-size:7.2px;color:#c8c8c8;letter-spacing:-0.25px">Render Queue</div>
<div class="t" style="left:8px;top:838.8px;font-size:9.6px;color:#8ea6f6;letter-spacing:-0.1px">0:00:01:09</div>
<div class="t" style="left:7px;top:850px;font-size:5.4px;color:#2e4a8a">00039 (30.00 fps)</div>
<div class="a" style="left:63px;top:841px;width:413px;height:11px;background:#121212;border-radius:2px"></div>
<svg class="a" style="left:66px;top:842px" width="12" height="9"><circle cx="3.5" cy="3.5" r="2.5" stroke="#aaa" fill="none" stroke-width="1.1"/><path d="M5.5 5.5 L7 7 M7.5 5.5 L8.5 7 L10 5" stroke="#aaa" fill="none" stroke-width="1"/></svg>
<svg class="a" style="left:484px;top:840px" width="75" height="15">
<path d="M1 3 h4 M3 5 h4 v4 h3 M7 7 h3" stroke="#c8c8c8" stroke-width="1.3" fill="none"/>
<path d="M16 6 q5 -5 10 0 z M21 6 v5 M18 9 h6" stroke="#c8c8c8" fill="#c8c8c8" stroke-width="1"/>
<rect x="32" y="3" width="8" height="8" fill="#aaa"/><rect x="34" y="1.5" width="6" height="6" fill="#ccc"/>
<path d="M47 10 l4 -5 a2 2 0 0 1 3 3 l-4 5 a2 2 0 0 1 -3 -3z" stroke="#bbb" fill="#888" stroke-width="1"/>
<rect x="61" y="2" width="9" height="9" stroke="#bbb" fill="none"/><path d="M62.5 4 l6 5" stroke="#bbb"/>
</svg>
<!-- column header -->
<div class="a" style="left:2px;top:858px;width:564px;height:11.5px;background:#161616"></div>
<svg class="a" style="left:0;top:858px" width="566" height="12">
<path d="M4 6 q3.5 -4 7 0 q-3.5 4 -7 0z" fill="#ddd"/><circle cx="7.5" cy="6" r="1.3" fill="#222"/>
<path d="M14 4 h2 l3 -2 v8 l-3 -2 h-2z" fill="#ccc"/><circle cx="26" cy="6" r="2.3" fill="#ddd"/>
<rect x="33.5" y="5" width="5" height="4.5" fill="#ccc"/><path d="M34.5 5 v-1.5 a1.5 1.5 0 0 1 3 0 v1.5" stroke="#ccc" fill="none"/>
<path d="M52 3 h3 l4 4 l-3 3 l-4 -4z" fill="#ccc"/>
<path d="M68 3.5 l-1 6 M70 3.5 l-1 6" stroke="#888" stroke-width="0.8"/>
<path d="M264 5 q3.5 -4 7 0 v2 h-7z M265 8 v2 M270 8 v2" fill="#ccc" stroke="#ccc" stroke-width="0.8"/>
<circle cx="277" cy="6" r="2" stroke="#bbb" fill="none"/><path d="M283 2 l6 7" stroke="#bbb"/>
<rect x="302" y="2.5" width="7" height="7" fill="#aaa"/><circle cx="314.5" cy="6" r="3.2" fill="#999"/><circle cx="324" cy="6" r="3.3" fill="#ccc"/><circle cx="333.5" cy="6" r="3" stroke="#aaa" fill="none"/>
<rect x="462" y="2" width="7" height="8" fill="#ddd"/><rect x="463.5" y="3.5" width="4" height="5" fill="#222"/><rect x="471" y="2" width="7" height="8" stroke="#ccc" fill="none"/>
</svg>
<div class="t" style="left:293px;top:860px;font-size:7px;color:#bbb;font-style:italic">fx</div>
<div class="t" style="left:80px;top:862px;font-size:6.4px;color:#c8c8c8">Source Name</div>
<div class="t" style="left:352px;top:862px;font-size:6.4px;color:#c8c8c8">Mode</div>
<div class="t" style="left:398.5px;top:862px;font-size:6.4px;color:#c8c8c8">T</div>
<div class="t" style="left:409px;top:862px;font-size:6.4px;color:#c8c8c8">Track Matte</div>
<div class="t" style="left:483px;top:862px;font-size:6.4px;color:#c8c8c8">Parent &amp; Link</div>

<div class="a" style="left:2px;top:870.1px;width:564px;height:10.6px;background:#3b3b3b;border-bottom:0.6px solid #262626"></div>
<div class="a" style="left:88px;top:870.4px;width:172px;height:10px;background:#bdbdbd"></div>
<svg class="a" style="left:0;top:870.1px" width="566" height="11"><path d="M4 5.3 q3.5 -4 7 0 q-3.5 4 -7 0z" fill="#e0e0e0"/><circle cx="7.5" cy="5.3" r="1.3" fill="#333"/><rect x="23" y="2" width="6.5" height="6.5" fill="#151515"/><rect x="32" y="2" width="6.5" height="6.5" fill="#151515"/><path d="M46 3 l2.5 2.3 l-2.5 2.3" stroke="#ccc" fill="none" stroke-width="1"/><rect x="54" y="1.5" width="8" height="8" fill="#7285ea"/><path d="M83 1.5 L84.3 4.3 L87.3 4.5 L85 6.5 L85.7 9.5 L83 8 L80.3 9.5 L81 6.5 L78.7 4.5 L81.7 4.3 Z" fill="#c8c8c8"/><path d="M264 4.5 q3.5 -4 7 0 v2 h-7z M265 7 v2.5 M270 7 v2.5" fill="#ddd" stroke="#ddd" stroke-width="0.8"/><circle cx="277" cy="5.3" r="2.6" fill="#4a4a4a" stroke="#555" stroke-width="0.5"/><rect x="281.5" y="1" width="9" height="9" fill="#1a1a1a"/><path d="M283 9 l6 -7" stroke="#ddd" stroke-width="1"/><rect x="311.5" y="1.5" width="7" height="7.5" fill="#121212"/><rect x="321" y="1.5" width="7" height="7.5" fill="#121212"/><rect x="330.5" y="1.5" width="7" height="7.5" fill="#121212"/><rect x="350" y="1" width="42" height="9" rx="1.5" fill="#0b0b0b"/><path d="M383.5 3.8 l2.3 2.3 l2.3 -2.3" stroke="#eee" fill="none" stroke-width="1.1"/><rect x="397" y="1.5" width="6.5" height="7.5" fill="#222"/><circle cx="411" cy="5.3" r="2.8" stroke="#888" fill="none" stroke-width="0.8"/><circle cx="411" cy="5.3" r="1.2" stroke="#888" fill="none" stroke-width="0.6"/><rect x="417.5" y="1" width="41" height="9" rx="1.5" fill="#0b0b0b"/><path d="M450 3.8 l2.3 2.3 l2.3 -2.3" stroke="#eee" fill="none" stroke-width="1.1"/><circle cx="487" cy="5.3" r="2.8" stroke="#888" fill="none" stroke-width="0.8"/><circle cx="487" cy="5.3" r="1.2" stroke="#888" fill="none" stroke-width="0.6"/><rect x="495" y="1" width="55" height="9" rx="1.5" fill="#0b0b0b"/><path d="M540 3.8 l2.3 2.3 l2.3 -2.3" stroke="#eee" fill="none" stroke-width="1.1"/></svg>
<div class="t" style="left:69px;top:872.9px;font-size:6.8px;color:#b4b4b4">1</div>
<div class="t" style="left:90px;top:872.8px;font-size:6.9px;color:#5c5c5c">Shape Layer 10</div>
<div class="t" style="left:355px;top:871.7px;font-size:7.3px;color:#f0f0f0">Normal</div>
<div class="t" style="left:422px;top:871.7px;font-size:7.3px;color:#f0f0f0">No Mat</div>
<div class="t" style="left:500px;top:871.7px;font-size:7.3px;color:#f0f0f0">None</div>
<div class="a" style="left:568px;top:870.1px;width:1316px;height:11px;background:linear-gradient(#8898d6 0,#8898d6 1.2px,#6274dc 1.8px,#5a6ed6 55%,#5266cc 85%,#4858b8 96%,#4858b8 100%)"></div>
<div class="a" style="left:2px;top:880.7px;width:564px;height:10.6px;background:#3b3b3b;border-bottom:0.6px solid #262626"></div>
<div class="a" style="left:88px;top:881.0px;width:172px;height:10px;background:#bdbdbd"></div>
<svg class="a" style="left:0;top:880.7px" width="566" height="11"><path d="M4 5.3 q3.5 -4 7 0 q-3.5 4 -7 0z" fill="#e0e0e0"/><circle cx="7.5" cy="5.3" r="1.3" fill="#333"/><rect x="23" y="2" width="6.5" height="6.5" fill="#151515"/><rect x="32" y="2" width="6.5" height="6.5" fill="#151515"/><path d="M46 3 l2.5 2.3 l-2.5 2.3" stroke="#ccc" fill="none" stroke-width="1"/><rect x="54" y="1.5" width="8" height="8" fill="#7285ea"/><path d="M83 1.5 L84.3 4.3 L87.3 4.5 L85 6.5 L85.7 9.5 L83 8 L80.3 9.5 L81 6.5 L78.7 4.5 L81.7 4.3 Z" fill="#c8c8c8"/><path d="M264 4.5 q3.5 -4 7 0 v2 h-7z M265 7 v2.5 M270 7 v2.5" fill="#ddd" stroke="#ddd" stroke-width="0.8"/><circle cx="277" cy="5.3" r="2.6" fill="#4a4a4a" stroke="#555" stroke-width="0.5"/><rect x="281.5" y="1" width="9" height="9" fill="#1a1a1a"/><path d="M283 9 l6 -7" stroke="#ddd" stroke-width="1"/><rect x="311.5" y="1.5" width="7" height="7.5" fill="#121212"/><rect x="321" y="1.5" width="7" height="7.5" fill="#121212"/><rect x="330.5" y="1.5" width="7" height="7.5" fill="#121212"/><rect x="350" y="1" width="42" height="9" rx="1.5" fill="#0b0b0b"/><path d="M383.5 3.8 l2.3 2.3 l2.3 -2.3" stroke="#eee" fill="none" stroke-width="1.1"/><rect x="397" y="1.5" width="6.5" height="7.5" fill="#222"/><circle cx="411" cy="5.3" r="2.8" stroke="#888" fill="none" stroke-width="0.8"/><circle cx="411" cy="5.3" r="1.2" stroke="#888" fill="none" stroke-width="0.6"/><rect x="417.5" y="1" width="41" height="9" rx="1.5" fill="#0b0b0b"/><path d="M450 3.8 l2.3 2.3 l2.3 -2.3" stroke="#eee" fill="none" stroke-width="1.1"/><circle cx="487" cy="5.3" r="2.8" stroke="#888" fill="none" stroke-width="0.8"/><circle cx="487" cy="5.3" r="1.2" stroke="#888" fill="none" stroke-width="0.6"/><rect x="495" y="1" width="55" height="9" rx="1.5" fill="#0b0b0b"/><path d="M540 3.8 l2.3 2.3 l2.3 -2.3" stroke="#eee" fill="none" stroke-width="1.1"/></svg>
<div class="t" style="left:69px;top:883.5px;font-size:6.8px;color:#b4b4b4">2</div>
<div class="t" style="left:90px;top:883.4px;font-size:6.9px;color:#5c5c5c">Shape Layer 9</div>
<div class="t" style="left:355px;top:882.3px;font-size:7.3px;color:#f0f0f0">Normal</div>
<div class="t" style="left:422px;top:882.3px;font-size:7.3px;color:#f0f0f0">No Mat</div>
<div class="t" style="left:500px;top:882.3px;font-size:7.3px;color:#f0f0f0">None</div>
<div class="a" style="left:568px;top:880.7px;width:1316px;height:11px;background:linear-gradient(#8898d6 0,#8898d6 1.2px,#6274dc 1.8px,#5a6ed6 55%,#5266cc 85%,#4858b8 96%,#4858b8 100%)"></div>
<div class="a" style="left:2px;top:891.3px;width:564px;height:10.6px;background:#3b3b3b;border-bottom:0.6px solid #262626"></div>
<div class="a" style="left:88px;top:891.6px;width:172px;height:10px;background:#bdbdbd"></div>
<svg class="a" style="left:0;top:891.3px" width="566" height="11"><path d="M4 5.3 q3.5 -4 7 0 q-3.5 4 -7 0z" fill="#e0e0e0"/><circle cx="7.5" cy="5.3" r="1.3" fill="#333"/><rect x="23" y="2" width="6.5" height="6.5" fill="#151515"/><rect x="32" y="2" width="6.5" height="6.5" fill="#151515"/><path d="M46 3 l2.5 2.3 l-2.5 2.3" stroke="#ccc" fill="none" stroke-width="1"/><rect x="54" y="1.5" width="8" height="8" fill="#7285ea"/><path d="M83 1.5 L84.3 4.3 L87.3 4.5 L85 6.5 L85.7 9.5 L83 8 L80.3 9.5 L81 6.5 L78.7 4.5 L81.7 4.3 Z" fill="#c8c8c8"/><path d="M264 4.5 q3.5 -4 7 0 v2 h-7z M265 7 v2.5 M270 7 v2.5" fill="#ddd" stroke="#ddd" stroke-width="0.8"/><circle cx="277" cy="5.3" r="2.6" fill="#4a4a4a" stroke="#555" stroke-width="0.5"/><rect x="281.5" y="1" width="9" height="9" fill="#1a1a1a"/><path d="M283 9 l6 -7" stroke="#ddd" stroke-width="1"/><rect x="311.5" y="1.5" width="7" height="7.5" fill="#121212"/><rect x="321" y="1.5" width="7" height="7.5" fill="#121212"/><rect x="330.5" y="1.5" width="7" height="7.5" fill="#121212"/><rect x="350" y="1" width="42" height="9" rx="1.5" fill="#0b0b0b"/><path d="M383.5 3.8 l2.3 2.3 l2.3 -2.3" stroke="#eee" fill="none" stroke-width="1.1"/><rect x="397" y="1.5" width="6.5" height="7.5" fill="#222"/><circle cx="411" cy="5.3" r="2.8" stroke="#888" fill="none" stroke-width="0.8"/><circle cx="411" cy="5.3" r="1.2" stroke="#888" fill="none" stroke-width="0.6"/><rect x="417.5" y="1" width="41" height="9" rx="1.5" fill="#0b0b0b"/><path d="M450 3.8 l2.3 2.3 l2.3 -2.3" stroke="#eee" fill="none" stroke-width="1.1"/><circle cx="487" cy="5.3" r="2.8" stroke="#888" fill="none" stroke-width="0.8"/><circle cx="487" cy="5.3" r="1.2" stroke="#888" fill="none" stroke-width="0.6"/><rect x="495" y="1" width="55" height="9" rx="1.5" fill="#0b0b0b"/><path d="M540 3.8 l2.3 2.3 l2.3 -2.3" stroke="#eee" fill="none" stroke-width="1.1"/></svg>
<div class="t" style="left:69px;top:894.1px;font-size:6.8px;color:#b4b4b4">3</div>
<div class="t" style="left:90px;top:894.0px;font-size:6.9px;color:#5c5c5c">Shape Layer 8</div>
<div class="t" style="left:355px;top:892.9px;font-size:7.3px;color:#f0f0f0">Normal</div>
<div class="t" style="left:422px;top:892.9px;font-size:7.3px;color:#f0f0f0">No Mat</div>
<div class="t" style="left:500px;top:892.9px;font-size:7.3px;color:#f0f0f0">None</div>
<div class="a" style="left:568px;top:891.3px;width:1316px;height:11px;background:linear-gradient(#8898d6 0,#8898d6 1.2px,#6274dc 1.8px,#5a6ed6 55%,#5266cc 85%,#4858b8 96%,#4858b8 100%)"></div>
<div class="a" style="left:2px;top:901.9px;width:564px;height:10.6px;background:#3b3b3b;border-bottom:0.6px solid #262626"></div>
<div class="a" style="left:88px;top:902.2px;width:172px;height:10px;background:#bdbdbd"></div>
<svg class="a" style="left:0;top:901.9px" width="566" height="11"><path d="M4 5.3 q3.5 -4 7 0 q-3.5 4 -7 0z" fill="#e0e0e0"/><circle cx="7.5" cy="5.3" r="1.3" fill="#333"/><rect x="23" y="2" width="6.5" height="6.5" fill="#151515"/><rect x="32" y="2" width="6.5" height="6.5" fill="#151515"/><path d="M46 3 l2.5 2.3 l-2.5 2.3" stroke="#ccc" fill="none" stroke-width="1"/><rect x="54" y="1.5" width="8" height="8" fill="#7285ea"/><path d="M83 1.5 L84.3 4.3 L87.3 4.5 L85 6.5 L85.7 9.5 L83 8 L80.3 9.5 L81 6.5 L78.7 4.5 L81.7 4.3 Z" fill="#c8c8c8"/><path d="M264 4.5 q3.5 -4 7 0 v2 h-7z M265 7 v2.5 M270 7 v2.5" fill="#ddd" stroke="#ddd" stroke-width="0.8"/><circle cx="277" cy="5.3" r="2.6" fill="#4a4a4a" stroke="#555" stroke-width="0.5"/><rect x="281.5" y="1" width="9" height="9" fill="#1a1a1a"/><path d="M283 9 l6 -7" stroke="#ddd" stroke-width="1"/><rect x="311.5" y="1.5" width="7" height="7.5" fill="#121212"/><rect x="321" y="1.5" width="7" height="7.5" fill="#121212"/><rect x="330.5" y="1.5" width="7" height="7.5" fill="#121212"/><rect x="350" y="1" width="42" height="9" rx="1.5" fill="#0b0b0b"/><path d="M383.5 3.8 l2.3 2.3 l2.3 -2.3" stroke="#eee" fill="none" stroke-width="1.1"/><rect x="397" y="1.5" width="6.5" height="7.5" fill="#222"/><circle cx="411" cy="5.3" r="2.8" stroke="#888" fill="none" stroke-width="0.8"/><circle cx="411" cy="5.3" r="1.2" stroke="#888" fill="none" stroke-width="0.6"/><rect x="417.5" y="1" width="41" height="9" rx="1.5" fill="#0b0b0b"/><path d="M450 3.8 l2.3 2.3 l2.3 -2.3" stroke="#eee" fill="none" stroke-width="1.1"/><circle cx="487" cy="5.3" r="2.8" stroke="#888" fill="none" stroke-width="0.8"/><circle cx="487" cy="5.3" r="1.2" stroke="#888" fill="none" stroke-width="0.6"/><rect x="495" y="1" width="55" height="9" rx="1.5" fill="#0b0b0b"/><path d="M540 3.8 l2.3 2.3 l2.3 -2.3" stroke="#eee" fill="none" stroke-width="1.1"/></svg>
<div class="t" style="left:69px;top:904.7px;font-size:6.8px;color:#b4b4b4">4</div>
<div class="t" style="left:90px;top:904.6px;font-size:6.9px;color:#5c5c5c">Shape Layer 7</div>
<div class="t" style="left:355px;top:903.5px;font-size:7.3px;color:#f0f0f0">Normal</div>
<div class="t" style="left:422px;top:903.5px;font-size:7.3px;color:#f0f0f0">No Mat</div>
<div class="t" style="left:500px;top:903.5px;font-size:7.3px;color:#f0f0f0">None</div>
<div class="a" style="left:568px;top:901.9px;width:1316px;height:11px;background:linear-gradient(#8898d6 0,#8898d6 1.2px,#6274dc 1.8px,#5a6ed6 55%,#5266cc 85%,#4858b8 96%,#4858b8 100%)"></div>
<div class="a" style="left:2px;top:912.5px;width:564px;height:10.6px;background:#3b3b3b;border-bottom:0.6px solid #262626"></div>
<div class="a" style="left:88px;top:912.8px;width:172px;height:10px;background:#bdbdbd"></div>
<svg class="a" style="left:0;top:912.5px" width="566" height="11"><path d="M4 5.3 q3.5 -4 7 0 q-3.5 4 -7 0z" fill="#e0e0e0"/><circle cx="7.5" cy="5.3" r="1.3" fill="#333"/><rect x="23" y="2" width="6.5" height="6.5" fill="#151515"/><rect x="32" y="2" width="6.5" height="6.5" fill="#151515"/><path d="M46 3 l2.5 2.3 l-2.5 2.3" stroke="#ccc" fill="none" stroke-width="1"/><rect x="54" y="1.5" width="8" height="8" fill="#7285ea"/><path d="M83 1.5 L84.3 4.3 L87.3 4.5 L85 6.5 L85.7 9.5 L83 8 L80.3 9.5 L81 6.5 L78.7 4.5 L81.7 4.3 Z" fill="#c8c8c8"/><path d="M264 4.5 q3.5 -4 7 0 v2 h-7z M265 7 v2.5 M270 7 v2.5" fill="#ddd" stroke="#ddd" stroke-width="0.8"/><circle cx="277" cy="5.3" r="2.6" fill="#4a4a4a" stroke="#555" stroke-width="0.5"/><rect x="281.5" y="1" width="9" height="9" fill="#1a1a1a"/><path d="M283 9 l6 -7" stroke="#ddd" stroke-width="1"/><rect x="311.5" y="1.5" width="7" height="7.5" fill="#121212"/><rect x="321" y="1.5" width="7" height="7.5" fill="#121212"/><rect x="330.5" y="1.5" width="7" height="7.5" fill="#121212"/><rect x="350" y="1" width="42" height="9" rx="1.5" fill="#0b0b0b"/><path d="M383.5 3.8 l2.3 2.3 l2.3 -2.3" stroke="#eee" fill="none" stroke-width="1.1"/><rect x="397" y="1.5" width="6.5" height="7.5" fill="#222"/><circle cx="411" cy="5.3" r="2.8" stroke="#888" fill="none" stroke-width="0.8"/><circle cx="411" cy="5.3" r="1.2" stroke="#888" fill="none" stroke-width="0.6"/><rect x="417.5" y="1" width="41" height="9" rx="1.5" fill="#0b0b0b"/><path d="M450 3.8 l2.3 2.3 l2.3 -2.3" stroke="#eee" fill="none" stroke-width="1.1"/><circle cx="487" cy="5.3" r="2.8" stroke="#888" fill="none" stroke-width="0.8"/><circle cx="487" cy="5.3" r="1.2" stroke="#888" fill="none" stroke-width="0.6"/><rect x="495" y="1" width="55" height="9" rx="1.5" fill="#0b0b0b"/><path d="M540 3.8 l2.3 2.3 l2.3 -2.3" stroke="#eee" fill="none" stroke-width="1.1"/></svg>
<div class="t" style="left:69px;top:915.3px;font-size:6.8px;color:#b4b4b4">5</div>
<div class="t" style="left:90px;top:915.2px;font-size:6.9px;color:#5c5c5c">Shape Layer 6</div>
<div class="t" style="left:355px;top:914.1px;font-size:7.3px;color:#f0f0f0">Normal</div>
<div class="t" style="left:422px;top:914.1px;font-size:7.3px;color:#f0f0f0">No Mat</div>
<div class="t" style="left:500px;top:914.1px;font-size:7.3px;color:#f0f0f0">None</div>
<div class="a" style="left:568px;top:912.5px;width:1316px;height:11px;background:linear-gradient(#8898d6 0,#8898d6 1.2px,#6274dc 1.8px,#5a6ed6 55%,#5266cc 85%,#4858b8 96%,#4858b8 100%)"></div>
<div class="a" style="left:2px;top:923.1px;width:564px;height:10.6px;background:#3b3b3b;border-bottom:0.6px solid #262626"></div>
<div class="a" style="left:88px;top:923.4px;width:172px;height:10px;background:#bdbdbd"></div>
<svg class="a" style="left:0;top:923.1px" width="566" height="11"><path d="M4 5.3 q3.5 -4 7 0 q-3.5 4 -7 0z" fill="#e0e0e0"/><circle cx="7.5" cy="5.3" r="1.3" fill="#333"/><rect x="23" y="2" width="6.5" height="6.5" fill="#151515"/><rect x="32" y="2" width="6.5" height="6.5" fill="#151515"/><path d="M46 3 l2.5 2.3 l-2.5 2.3" stroke="#ccc" fill="none" stroke-width="1"/><rect x="54" y="1.5" width="8" height="8" fill="#7285ea"/><path d="M83 1.5 L84.3 4.3 L87.3 4.5 L85 6.5 L85.7 9.5 L83 8 L80.3 9.5 L81 6.5 L78.7 4.5 L81.7 4.3 Z" fill="#c8c8c8"/><path d="M264 4.5 q3.5 -4 7 0 v2 h-7z M265 7 v2.5 M270 7 v2.5" fill="#ddd" stroke="#ddd" stroke-width="0.8"/><circle cx="277" cy="5.3" r="2.6" fill="#4a4a4a" stroke="#555" stroke-width="0.5"/><rect x="281.5" y="1" width="9" height="9" fill="#1a1a1a"/><path d="M283 9 l6 -7" stroke="#ddd" stroke-width="1"/><rect x="311.5" y="1.5" width="7" height="7.5" fill="#121212"/><rect x="321" y="1.5" width="7" height="7.5" fill="#121212"/><rect x="330.5" y="1.5" width="7" height="7.5" fill="#121212"/><rect x="350" y="1" width="42" height="9" rx="1.5" fill="#0b0b0b"/><path d="M383.5 3.8 l2.3 2.3 l2.3 -2.3" stroke="#eee" fill="none" stroke-width="1.1"/><rect x="397" y="1.5" width="6.5" height="7.5" fill="#222"/><circle cx="411" cy="5.3" r="2.8" stroke="#888" fill="none" stroke-width="0.8"/><circle cx="411" cy="5.3" r="1.2" stroke="#888" fill="none" stroke-width="0.6"/><rect x="417.5" y="1" width="41" height="9" rx="1.5" fill="#0b0b0b"/><path d="M450 3.8 l2.3 2.3 l2.3 -2.3" stroke="#eee" fill="none" stroke-width="1.1"/><circle cx="487" cy="5.3" r="2.8" stroke="#888" fill="none" stroke-width="0.8"/><circle cx="487" cy="5.3" r="1.2" stroke="#888" fill="none" stroke-width="0.6"/><rect x="495" y="1" width="55" height="9" rx="1.5" fill="#0b0b0b"/><path d="M540 3.8 l2.3 2.3 l2.3 -2.3" stroke="#eee" fill="none" stroke-width="1.1"/></svg>
<div class="t" style="left:69px;top:925.9px;font-size:6.8px;color:#b4b4b4">6</div>
<div class="t" style="left:90px;top:925.8px;font-size:6.9px;color:#5c5c5c">Shape Layer 5</div>
<div class="t" style="left:355px;top:924.7px;font-size:7.3px;color:#f0f0f0">Normal</div>
<div class="t" style="left:422px;top:924.7px;font-size:7.3px;color:#f0f0f0">No Mat</div>
<div class="t" style="left:500px;top:924.7px;font-size:7.3px;color:#f0f0f0">None</div>
<div class="a" style="left:568px;top:923.1px;width:1316px;height:11px;background:linear-gradient(#8898d6 0,#8898d6 1.2px,#6274dc 1.8px,#5a6ed6 55%,#5266cc 85%,#4858b8 96%,#4858b8 100%)"></div>
<div class="a" style="left:2px;top:933.7px;width:564px;height:10.6px;background:#3b3b3b;border-bottom:0.6px solid #262626"></div>
<div class="a" style="left:88px;top:934.0px;width:172px;height:10px;background:#bdbdbd"></div>
<svg class="a" style="left:0;top:933.7px" width="566" height="11"><path d="M4 5.3 q3.5 -4 7 0 q-3.5 4 -7 0z" fill="#e0e0e0"/><circle cx="7.5" cy="5.3" r="1.3" fill="#333"/><rect x="23" y="2" width="6.5" height="6.5" fill="#151515"/><rect x="32" y="2" width="6.5" height="6.5" fill="#151515"/><path d="M46 3 l2.5 2.3 l-2.5 2.3" stroke="#ccc" fill="none" stroke-width="1"/><rect x="54" y="1.5" width="8" height="8" fill="#7285ea"/><path d="M83 1.5 L84.3 4.3 L87.3 4.5 L85 6.5 L85.7 9.5 L83 8 L80.3 9.5 L81 6.5 L78.7 4.5 L81.7 4.3 Z" fill="#c8c8c8"/><path d="M264 4.5 q3.5 -4 7 0 v2 h-7z M265 7 v2.5 M270 7 v2.5" fill="#ddd" stroke="#ddd" stroke-width="0.8"/><circle cx="277" cy="5.3" r="2.6" fill="#4a4a4a" stroke="#555" stroke-width="0.5"/><rect x="281.5" y="1" width="9" height="9" fill="#1a1a1a"/><path d="M283 9 l6 -7" stroke="#ddd" stroke-width="1"/><rect x="311.5" y="1.5" width="7" height="7.5" fill="#121212"/><rect x="321" y="1.5" width="7" height="7.5" fill="#121212"/><rect x="330.5" y="1.5" width="7" height="7.5" fill="#121212"/><rect x="350" y="1" width="42" height="9" rx="1.5" fill="#0b0b0b"/><path d="M383.5 3.8 l2.3 2.3 l2.3 -2.3" stroke="#eee" fill="none" stroke-width="1.1"/><rect x="397" y="1.5" width="6.5" height="7.5" fill="#222"/><circle cx="411" cy="5.3" r="2.8" stroke="#888" fill="none" stroke-width="0.8"/><circle cx="411" cy="5.3" r="1.2" stroke="#888" fill="none" stroke-width="0.6"/><rect x="417.5" y="1" width="41" height="9" rx="1.5" fill="#0b0b0b"/><path d="M450 3.8 l2.3 2.3 l2.3 -2.3" stroke="#eee" fill="none" stroke-width="1.1"/><circle cx="487" cy="5.3" r="2.8" stroke="#888" fill="none" stroke-width="0.8"/><circle cx="487" cy="5.3" r="1.2" stroke="#888" fill="none" stroke-width="0.6"/><rect x="495" y="1" width="55" height="9" rx="1.5" fill="#0b0b0b"/><path d="M540 3.8 l2.3 2.3 l2.3 -2.3" stroke="#eee" fill="none" stroke-width="1.1"/></svg>
<div class="t" style="left:69px;top:936.5px;font-size:6.8px;color:#b4b4b4">7</div>
<div class="t" style="left:90px;top:936.4px;font-size:6.9px;color:#5c5c5c">Shape Layer 4</div>
<div class="t" style="left:355px;top:935.3px;font-size:7.3px;color:#f0f0f0">Normal</div>
<div class="t" style="left:422px;top:935.3px;font-size:7.3px;color:#f0f0f0">No Mat</div>
<div class="t" style="left:500px;top:935.3px;font-size:7.3px;color:#f0f0f0">None</div>
<div class="a" style="left:568px;top:933.7px;width:1316px;height:11px;background:linear-gradient(#8898d6 0,#8898d6 1.2px,#6274dc 1.8px,#5a6ed6 55%,#5266cc 85%,#4858b8 96%,#4858b8 100%)"></div>
<div class="a" style="left:2px;top:944.3px;width:564px;height:10.6px;background:#3b3b3b;border-bottom:0.6px solid #262626"></div>
<div class="a" style="left:88px;top:944.6px;width:172px;height:10px;background:#bdbdbd"></div>
<svg class="a" style="left:0;top:944.3px" width="566" height="11"><path d="M4 5.3 q3.5 -4 7 0 q-3.5 4 -7 0z" fill="#e0e0e0"/><circle cx="7.5" cy="5.3" r="1.3" fill="#333"/><rect x="23" y="2" width="6.5" height="6.5" fill="#151515"/><rect x="32" y="2" width="6.5" height="6.5" fill="#151515"/><path d="M46 3 l2.5 2.3 l-2.5 2.3" stroke="#ccc" fill="none" stroke-width="1"/><rect x="54" y="1.5" width="8" height="8" fill="#7285ea"/><path d="M83 1.5 L84.3 4.3 L87.3 4.5 L85 6.5 L85.7 9.5 L83 8 L80.3 9.5 L81 6.5 L78.7 4.5 L81.7 4.3 Z" fill="#c8c8c8"/><path d="M264 4.5 q3.5 -4 7 0 v2 h-7z M265 7 v2.5 M270 7 v2.5" fill="#ddd" stroke="#ddd" stroke-width="0.8"/><circle cx="277" cy="5.3" r="2.6" fill="#4a4a4a" stroke="#555" stroke-width="0.5"/><rect x="281.5" y="1" width="9" height="9" fill="#1a1a1a"/><path d="M283 9 l6 -7" stroke="#ddd" stroke-width="1"/><rect x="311.5" y="1.5" width="7" height="7.5" fill="#121212"/><rect x="321" y="1.5" width="7" height="7.5" fill="#121212"/><rect x="330.5" y="1.5" width="7" height="7.5" fill="#121212"/><rect x="350" y="1" width="42" height="9" rx="1.5" fill="#0b0b0b"/><path d="M383.5 3.8 l2.3 2.3 l2.3 -2.3" stroke="#eee" fill="none" stroke-width="1.1"/><rect x="397" y="1.5" width="6.5" height="7.5" fill="#222"/><circle cx="411" cy="5.3" r="2.8" stroke="#888" fill="none" stroke-width="0.8"/><circle cx="411" cy="5.3" r="1.2" stroke="#888" fill="none" stroke-width="0.6"/><rect x="417.5" y="1" width="41" height="9" rx="1.5" fill="#0b0b0b"/><path d="M450 3.8 l2.3 2.3 l2.3 -2.3" stroke="#eee" fill="none" stroke-width="1.1"/><circle cx="487" cy="5.3" r="2.8" stroke="#888" fill="none" stroke-width="0.8"/><circle cx="487" cy="5.3" r="1.2" stroke="#888" fill="none" stroke-width="0.6"/><rect x="495" y="1" width="55" height="9" rx="1.5" fill="#0b0b0b"/><path d="M540 3.8 l2.3 2.3 l2.3 -2.3" stroke="#eee" fill="none" stroke-width="1.1"/></svg>
<div class="t" style="left:69px;top:947.1px;font-size:6.8px;color:#b4b4b4">8</div>
<div class="t" style="left:90px;top:947.0px;font-size:6.9px;color:#5c5c5c">Shape Layer 3</div>
<div class="t" style="left:355px;top:945.9px;font-size:7.3px;color:#f0f0f0">Normal</div>
<div class="t" style="left:422px;top:945.9px;font-size:7.3px;color:#f0f0f0">No Mat</div>
<div class="t" style="left:500px;top:945.9px;font-size:7.3px;color:#f0f0f0">None</div>
<div class="a" style="left:568px;top:944.3px;width:1316px;height:11px;background:linear-gradient(#8898d6 0,#8898d6 1.2px,#6274dc 1.8px,#5a6ed6 55%,#5266cc 85%,#4858b8 96%,#4858b8 100%)"></div>
<div class="a" style="left:2px;top:954.9px;width:564px;height:10.6px;background:#3b3b3b;border-bottom:0.6px solid #262626"></div>
<div class="a" style="left:88px;top:955.2px;width:172px;height:10px;background:#bdbdbd"></div>
<svg class="a" style="left:0;top:954.9px" width="566" height="11"><path d="M4 5.3 q3.5 -4 7 0 q-3.5 4 -7 0z" fill="#e0e0e0"/><circle cx="7.5" cy="5.3" r="1.3" fill="#333"/><rect x="23" y="2" width="6.5" height="6.5" fill="#151515"/><rect x="32" y="2" width="6.5" height="6.5" fill="#151515"/><path d="M46 3 l2.5 2.3 l-2.5 2.3" stroke="#ccc" fill="none" stroke-width="1"/><rect x="54" y="1.5" width="8" height="8" fill="#7285ea"/><path d="M83 1.5 L84.3 4.3 L87.3 4.5 L85 6.5 L85.7 9.5 L83 8 L80.3 9.5 L81 6.5 L78.7 4.5 L81.7 4.3 Z" fill="#c8c8c8"/><path d="M264 4.5 q3.5 -4 7 0 v2 h-7z M265 7 v2.5 M270 7 v2.5" fill="#ddd" stroke="#ddd" stroke-width="0.8"/><circle cx="277" cy="5.3" r="2.6" fill="#4a4a4a" stroke="#555" stroke-width="0.5"/><rect x="281.5" y="1" width="9" height="9" fill="#1a1a1a"/><path d="M283 9 l6 -7" stroke="#ddd" stroke-width="1"/><rect x="311.5" y="1.5" width="7" height="7.5" fill="#121212"/><rect x="321" y="1.5" width="7" height="7.5" fill="#121212"/><rect x="330.5" y="1.5" width="7" height="7.5" fill="#121212"/><rect x="350" y="1" width="42" height="9" rx="1.5" fill="#0b0b0b"/><path d="M383.5 3.8 l2.3 2.3 l2.3 -2.3" stroke="#eee" fill="none" stroke-width="1.1"/><rect x="397" y="1.5" width="6.5" height="7.5" fill="#222"/><circle cx="411" cy="5.3" r="2.8" stroke="#888" fill="none" stroke-width="0.8"/><circle cx="411" cy="5.3" r="1.2" stroke="#888" fill="none" stroke-width="0.6"/><rect x="417.5" y="1" width="41" height="9" rx="1.5" fill="#0b0b0b"/><path d="M450 3.8 l2.3 2.3 l2.3 -2.3" stroke="#eee" fill="none" stroke-width="1.1"/><circle cx="487" cy="5.3" r="2.8" stroke="#888" fill="none" stroke-width="0.8"/><circle cx="487" cy="5.3" r="1.2" stroke="#888" fill="none" stroke-width="0.6"/><rect x="495" y="1" width="55" height="9" rx="1.5" fill="#0b0b0b"/><path d="M540 3.8 l2.3 2.3 l2.3 -2.3" stroke="#eee" fill="none" stroke-width="1.1"/></svg>
<div class="t" style="left:69px;top:957.7px;font-size:6.8px;color:#b4b4b4">9</div>
<div class="t" style="left:90px;top:957.6px;font-size:6.9px;color:#5c5c5c">Shape Layer 2</div>
<div class="t" style="left:355px;top:956.5px;font-size:7.3px;color:#f0f0f0">Normal</div>
<div class="t" style="left:422px;top:956.5px;font-size:7.3px;color:#f0f0f0">No Mat</div>
<div class="t" style="left:500px;top:956.5px;font-size:7.3px;color:#f0f0f0">None</div>
<div class="a" style="left:568px;top:954.9px;width:1316px;height:11px;background:linear-gradient(#8898d6 0,#8898d6 1.2px,#6274dc 1.8px,#5a6ed6 55%,#5266cc 85%,#4858b8 96%,#4858b8 100%)"></div>
<div class="a" style="left:2px;top:965.5px;width:564px;height:10.6px;background:#3b3b3b;border-bottom:0.6px solid #262626"></div>
<div class="a" style="left:88px;top:965.8px;width:172px;height:10px;background:#bdbdbd"></div>
<svg class="a" style="left:0;top:965.5px" width="566" height="11"><path d="M4 5.3 q3.5 -4 7 0 q-3.5 4 -7 0z" fill="#e0e0e0"/><circle cx="7.5" cy="5.3" r="1.3" fill="#333"/><rect x="23" y="2" width="6.5" height="6.5" fill="#151515"/><rect x="32" y="2" width="6.5" height="6.5" fill="#151515"/><path d="M46 3 l2.5 2.3 l-2.5 2.3" stroke="#ccc" fill="none" stroke-width="1"/><rect x="54" y="1.5" width="8" height="8" fill="#7285ea"/><path d="M83 1.5 L84.3 4.3 L87.3 4.5 L85 6.5 L85.7 9.5 L83 8 L80.3 9.5 L81 6.5 L78.7 4.5 L81.7 4.3 Z" fill="#c8c8c8"/><path d="M264 4.5 q3.5 -4 7 0 v2 h-7z M265 7 v2.5 M270 7 v2.5" fill="#ddd" stroke="#ddd" stroke-width="0.8"/><circle cx="277" cy="5.3" r="2.6" fill="#4a4a4a" stroke="#555" stroke-width="0.5"/><rect x="281.5" y="1" width="9" height="9" fill="#1a1a1a"/><path d="M283 9 l6 -7" stroke="#ddd" stroke-width="1"/><rect x="311.5" y="1.5" width="7" height="7.5" fill="#121212"/><rect x="321" y="1.5" width="7" height="7.5" fill="#121212"/><rect x="330.5" y="1.5" width="7" height="7.5" fill="#121212"/><rect x="350" y="1" width="42" height="9" rx="1.5" fill="#0b0b0b"/><path d="M383.5 3.8 l2.3 2.3 l2.3 -2.3" stroke="#eee" fill="none" stroke-width="1.1"/><rect x="397" y="1.5" width="6.5" height="7.5" fill="#222"/><circle cx="411" cy="5.3" r="2.8" stroke="#888" fill="none" stroke-width="0.8"/><circle cx="411" cy="5.3" r="1.2" stroke="#888" fill="none" stroke-width="0.6"/><rect x="417.5" y="1" width="41" height="9" rx="1.5" fill="#0b0b0b"/><path d="M450 3.8 l2.3 2.3 l2.3 -2.3" stroke="#eee" fill="none" stroke-width="1.1"/><circle cx="487" cy="5.3" r="2.8" stroke="#888" fill="none" stroke-width="0.8"/><circle cx="487" cy="5.3" r="1.2" stroke="#888" fill="none" stroke-width="0.6"/><rect x="495" y="1" width="55" height="9" rx="1.5" fill="#0b0b0b"/><path d="M540 3.8 l2.3 2.3 l2.3 -2.3" stroke="#eee" fill="none" stroke-width="1.1"/></svg>
<div class="t" style="left:66px;top:968.3px;font-size:6.8px;color:#b4b4b4">10</div>
<div class="t" style="left:90px;top:968.2px;font-size:6.9px;color:#5c5c5c">Shape Layer 1</div>
<div class="t" style="left:355px;top:967.1px;font-size:7.3px;color:#f0f0f0">Normal</div>
<div class="t" style="left:422px;top:967.1px;font-size:7.3px;color:#f0f0f0">No Mat</div>
<div class="t" style="left:500px;top:967.1px;font-size:7.3px;color:#f0f0f0">None</div>
<div class="a" style="left:568px;top:965.5px;width:1316px;height:11px;background:linear-gradient(#8898d6 0,#8898d6 1.2px,#6274dc 1.8px,#5a6ed6 55%,#5266cc 85%,#4858b8 96%,#4858b8 100%)"></div>
<div class="a" style="left:2px;top:976.1px;width:564px;height:10.6px;background:#2c2c2c;border-bottom:0.6px solid #262626"></div>
<svg class="a" style="left:0;top:976.1px" width="566" height="11"><path d="M4 5.3 q3.5 -4 7 0 q-3.5 4 -7 0z" fill="#e0e0e0"/><circle cx="7.5" cy="5.3" r="1.3" fill="#333"/><rect x="23" y="2" width="6.5" height="6.5" fill="#151515"/><rect x="32" y="2" width="6.5" height="6.5" fill="#151515"/><path d="M46 3 l2.5 2.3 l-2.5 2.3" stroke="#ccc" fill="none" stroke-width="1"/><rect x="54" y="1.5" width="8" height="8" fill="#a03434"/><rect x="79" y="1.5" width="7.5" height="8" fill="#fafafa"/><path d="M264 4.5 q3.5 -4 7 0 v2 h-7z M265 7 v2.5 M270 7 v2.5" fill="#ddd" stroke="#ddd" stroke-width="0.8"/><rect x="281.5" y="1" width="9" height="9" fill="#1a1a1a"/><path d="M283 9 l6 -7" stroke="#ddd" stroke-width="1"/><rect x="311.5" y="1.5" width="7" height="7.5" fill="#121212"/><rect x="321" y="1.5" width="7" height="7.5" fill="#121212"/><rect x="330.5" y="1.5" width="7" height="7.5" fill="#121212"/><rect x="350" y="1" width="42" height="9" rx="1.5" fill="#0b0b0b"/><path d="M383.5 3.8 l2.3 2.3 l2.3 -2.3" stroke="#eee" fill="none" stroke-width="1.1"/><rect x="397" y="1.5" width="6.5" height="7.5" fill="#222"/><circle cx="411" cy="5.3" r="2.8" stroke="#888" fill="none" stroke-width="0.8"/><circle cx="411" cy="5.3" r="1.2" stroke="#888" fill="none" stroke-width="0.6"/><rect x="417.5" y="1" width="41" height="9" rx="1.5" fill="#0b0b0b"/><path d="M450 3.8 l2.3 2.3 l2.3 -2.3" stroke="#eee" fill="none" stroke-width="1.1"/><circle cx="487" cy="5.3" r="2.8" stroke="#888" fill="none" stroke-width="0.8"/><circle cx="487" cy="5.3" r="1.2" stroke="#888" fill="none" stroke-width="0.6"/><rect x="495" y="1" width="55" height="9" rx="1.5" fill="#0b0b0b"/><path d="M540 3.8 l2.3 2.3 l2.3 -2.3" stroke="#eee" fill="none" stroke-width="1.1"/></svg>
<div class="t" style="left:66px;top:978.9px;font-size:6.8px;color:#e0e0e0">11</div>
<div class="t" style="left:90px;top:978.8px;font-size:6.9px;color:#e8e8e8">White Solid 1</div>
<div class="t" style="left:355px;top:977.7px;font-size:7.3px;color:#f0f0f0">Normal</div>
<div class="t" style="left:422px;top:977.7px;font-size:7.3px;color:#f0f0f0">No Mat</div>
<div class="t" style="left:500px;top:977.7px;font-size:7.3px;color:#f0f0f0">None</div>
<div class="a" style="left:568px;top:976.1px;width:1316px;height:10.6px;background:linear-gradient(#8a4a4a 0,#8a4a4a 1px,#7a3636 1.6px,#763434)"></div>
<div class="a" style="left:565px;top:839.8px;width:427px;height:5px;background:#676767;border-radius:2px"></div>
<div class="a" style="left:565px;top:840px;width:4px;height:5px;background:#4a80e0;border-radius:2px"></div><div class="a" style="left:988px;top:840px;width:4px;height:5px;background:#4a80e0;border-radius:2px"></div>

<div class="t" style="left:563.1px;top:847.6px;font-size:6.6px;color:#cfcfcf;letter-spacing:-0.25px">0:00f</div>
<div class="a" style="left:567.5px;top:853.5px;width:1.2px;height:7px;background:#a8a8a8"></div>
<div class="t" style="left:591.9px;top:847.6px;font-size:6.6px;color:#cfcfcf;letter-spacing:-0.25px">00:15f</div>
<div class="a" style="left:600.3px;top:853.5px;width:1.2px;height:7px;background:#a8a8a8"></div>
<div class="t" style="left:624.6px;top:847.6px;font-size:6.6px;color:#cfcfcf;letter-spacing:-0.25px">01:00f</div>
<div class="a" style="left:633.0px;top:853.5px;width:1.2px;height:7px;background:#a8a8a8"></div>
<div class="t" style="left:657.4px;top:847.6px;font-size:6.6px;color:#cfcfcf;letter-spacing:-0.25px">01:15f</div>
<div class="a" style="left:665.8px;top:853.5px;width:1.2px;height:7px;background:#a8a8a8"></div>
<div class="t" style="left:690.2px;top:847.6px;font-size:6.6px;color:#cfcfcf;letter-spacing:-0.25px">02:00f</div>
<div class="a" style="left:698.6px;top:853.5px;width:1.2px;height:7px;background:#a8a8a8"></div>
<div class="t" style="left:722.9px;top:847.6px;font-size:6.6px;color:#cfcfcf;letter-spacing:-0.25px">02:15f</div>
<div class="a" style="left:731.4px;top:853.5px;width:1.2px;height:7px;background:#a8a8a8"></div>
<div class="t" style="left:755.7px;top:847.6px;font-size:6.6px;color:#cfcfcf;letter-spacing:-0.25px">03:00f</div>
<div class="a" style="left:764.1px;top:853.5px;width:1.2px;height:7px;background:#a8a8a8"></div>
<div class="t" style="left:788.5px;top:847.6px;font-size:6.6px;color:#cfcfcf;letter-spacing:-0.25px">03:15f</div>
<div class="a" style="left:796.9px;top:853.5px;width:1.2px;height:7px;background:#a8a8a8"></div>
<div class="t" style="left:821.3px;top:847.6px;font-size:6.6px;color:#cfcfcf;letter-spacing:-0.25px">04:00f</div>
<div class="a" style="left:829.7px;top:853.5px;width:1.2px;height:7px;background:#a8a8a8"></div>
<div class="t" style="left:854.0px;top:847.6px;font-size:6.6px;color:#cfcfcf;letter-spacing:-0.25px">04:15f</div>
<div class="a" style="left:862.4px;top:853.5px;width:1.2px;height:7px;background:#a8a8a8"></div>
<div class="t" style="left:886.8px;top:847.6px;font-size:6.6px;color:#cfcfcf;letter-spacing:-0.25px">05:00f</div>
<div class="a" style="left:895.2px;top:853.5px;width:1.2px;height:7px;background:#a8a8a8"></div>
<div class="t" style="left:919.6px;top:847.6px;font-size:6.6px;color:#cfcfcf;letter-spacing:-0.25px">05:15f</div>
<div class="a" style="left:928.0px;top:853.5px;width:1.2px;height:7px;background:#a8a8a8"></div>
<div class="t" style="left:952.3px;top:847.6px;font-size:6.6px;color:#cfcfcf;letter-spacing:-0.25px">06:00f</div>
<div class="a" style="left:960.7px;top:853.5px;width:1.2px;height:7px;background:#a8a8a8"></div>
<div class="t" style="left:985.1px;top:847.6px;font-size:6.6px;color:#cfcfcf;letter-spacing:-0.25px">06:15f</div>
<div class="a" style="left:993.5px;top:853.5px;width:1.2px;height:7px;background:#a8a8a8"></div>
<div class="t" style="left:1017.9px;top:847.6px;font-size:6.6px;color:#cfcfcf;letter-spacing:-0.25px">07:00f</div>
<div class="a" style="left:1026.3px;top:853.5px;width:1.2px;height:7px;background:#a8a8a8"></div>
<div class="t" style="left:1050.7px;top:847.6px;font-size:6.6px;color:#cfcfcf;letter-spacing:-0.25px">07:15f</div>
<div class="a" style="left:1059.0px;top:853.5px;width:1.2px;height:7px;background:#a8a8a8"></div>
<div class="t" style="left:1083.4px;top:847.6px;font-size:6.6px;color:#cfcfcf;letter-spacing:-0.25px">08:00f</div>
<div class="a" style="left:1091.8px;top:853.5px;width:1.2px;height:7px;background:#a8a8a8"></div>
<div class="t" style="left:1116.2px;top:847.6px;font-size:6.6px;color:#cfcfcf;letter-spacing:-0.25px">08:15f</div>
<div class="a" style="left:1124.6px;top:853.5px;width:1.2px;height:7px;background:#a8a8a8"></div>
<div class="t" style="left:1149.0px;top:847.6px;font-size:6.6px;color:#cfcfcf;letter-spacing:-0.25px">09:00f</div>
<div class="a" style="left:1157.4px;top:853.5px;width:1.2px;height:7px;background:#a8a8a8"></div>
<div class="t" style="left:1181.7px;top:847.6px;font-size:6.6px;color:#cfcfcf;letter-spacing:-0.25px">09:15f</div>
<div class="a" style="left:1190.1px;top:853.5px;width:1.2px;height:7px;background:#a8a8a8"></div>
<div class="t" style="left:1214.5px;top:847.6px;font-size:6.6px;color:#cfcfcf;letter-spacing:-0.25px">10:00f</div>
<div class="a" style="left:1222.9px;top:853.5px;width:1.2px;height:7px;background:#a8a8a8"></div>
<div class="t" style="left:1247.3px;top:847.6px;font-size:6.6px;color:#cfcfcf;letter-spacing:-0.25px">10:15f</div>
<div class="a" style="left:1255.7px;top:853.5px;width:1.2px;height:7px;background:#a8a8a8"></div>
<div class="t" style="left:1280.0px;top:847.6px;font-size:6.6px;color:#cfcfcf;letter-spacing:-0.25px">11:00f</div>
<div class="a" style="left:1288.4px;top:853.5px;width:1.2px;height:7px;background:#a8a8a8"></div>
<div class="t" style="left:1312.8px;top:847.6px;font-size:6.6px;color:#cfcfcf;letter-spacing:-0.25px">11:15f</div>
<div class="a" style="left:1321.2px;top:853.5px;width:1.2px;height:7px;background:#a8a8a8"></div>
<div class="t" style="left:1345.6px;top:847.6px;font-size:6.6px;color:#cfcfcf;letter-spacing:-0.25px">12:00f</div>
<div class="a" style="left:1354.0px;top:853.5px;width:1.2px;height:7px;background:#a8a8a8"></div>
<div class="t" style="left:1378.4px;top:847.6px;font-size:6.6px;color:#cfcfcf;letter-spacing:-0.25px">12:15f</div>
<div class="a" style="left:1386.8px;top:853.5px;width:1.2px;height:7px;background:#a8a8a8"></div>
<div class="t" style="left:1411.1px;top:847.6px;font-size:6.6px;color:#cfcfcf;letter-spacing:-0.25px">13:00f</div>
<div class="a" style="left:1419.5px;top:853.5px;width:1.2px;height:7px;background:#a8a8a8"></div>
<div class="t" style="left:1443.9px;top:847.6px;font-size:6.6px;color:#cfcfcf;letter-spacing:-0.25px">13:15f</div>
<div class="a" style="left:1452.3px;top:853.5px;width:1.2px;height:7px;background:#a8a8a8"></div>
<div class="t" style="left:1476.7px;top:847.6px;font-size:6.6px;color:#cfcfcf;letter-spacing:-0.25px">14:00f</div>
<div class="a" style="left:1485.1px;top:853.5px;width:1.2px;height:7px;background:#a8a8a8"></div>
<div class="t" style="left:1509.4px;top:847.6px;font-size:6.6px;color:#cfcfcf;letter-spacing:-0.25px">14:15f</div>
<div class="a" style="left:1517.8px;top:853.5px;width:1.2px;height:7px;background:#a8a8a8"></div>
<div class="t" style="left:1542.2px;top:847.6px;font-size:6.6px;color:#cfcfcf;letter-spacing:-0.25px">15:00f</div>
<div class="a" style="left:1550.6px;top:853.5px;width:1.2px;height:7px;background:#a8a8a8"></div>
<div class="t" style="left:1575.0px;top:847.6px;font-size:6.6px;color:#cfcfcf;letter-spacing:-0.25px">15:15f</div>
<div class="a" style="left:1583.4px;top:853.5px;width:1.2px;height:7px;background:#a8a8a8"></div>
<div class="t" style="left:1607.7px;top:847.6px;font-size:6.6px;color:#cfcfcf;letter-spacing:-0.25px">16:00f</div>
<div class="a" style="left:1616.1px;top:853.5px;width:1.2px;height:7px;background:#a8a8a8"></div>
<div class="t" style="left:1640.5px;top:847.6px;font-size:6.6px;color:#cfcfcf;letter-spacing:-0.25px">16:15f</div>
<div class="a" style="left:1648.9px;top:853.5px;width:1.2px;height:7px;background:#a8a8a8"></div>
<div class="t" style="left:1673.3px;top:847.6px;font-size:6.6px;color:#cfcfcf;letter-spacing:-0.25px">17:00f</div>
<div class="a" style="left:1681.7px;top:853.5px;width:1.2px;height:7px;background:#a8a8a8"></div>
<div class="t" style="left:1706.0px;top:847.6px;font-size:6.6px;color:#cfcfcf;letter-spacing:-0.25px">17:15f</div>
<div class="a" style="left:1714.4px;top:853.5px;width:1.2px;height:7px;background:#a8a8a8"></div>
<div class="t" style="left:1738.8px;top:847.6px;font-size:6.6px;color:#cfcfcf;letter-spacing:-0.25px">18:00f</div>
<div class="a" style="left:1747.2px;top:853.5px;width:1.2px;height:7px;background:#a8a8a8"></div>
<div class="t" style="left:1771.6px;top:847.6px;font-size:6.6px;color:#cfcfcf;letter-spacing:-0.25px">18:15f</div>
<div class="a" style="left:1780.0px;top:853.5px;width:1.2px;height:7px;background:#a8a8a8"></div>
<div class="t" style="left:1804.4px;top:847.6px;font-size:6.6px;color:#cfcfcf;letter-spacing:-0.25px">19:00f</div>
<div class="a" style="left:1812.8px;top:853.5px;width:1.2px;height:7px;background:#a8a8a8"></div>
<div class="t" style="left:1837.1px;top:847.6px;font-size:6.6px;color:#cfcfcf;letter-spacing:-0.25px">19:15f</div>
<div class="a" style="left:1845.5px;top:853.5px;width:1.2px;height:7px;background:#a8a8a8"></div>
<div class="t" style="left:1869.9px;top:847.6px;font-size:6.6px;color:#cfcfcf;letter-spacing:-0.25px">20:0</div>
<div class="a" style="left:1878.3px;top:853.5px;width:1.2px;height:7px;background:#a8a8a8"></div>

<div class="a" style="left:565px;top:858px;width:138px;height:9.5px;background:#555"></div>
<div class="a" style="left:565px;top:858px;width:3px;height:9.5px;background:#4a80e0;border-radius:1px"></div><div class="a" style="left:701px;top:858px;width:3px;height:9.5px;background:#4a80e0;border-radius:1px"></div>
<div class="a" style="left:568px;top:867.5px;width:135px;height:1.6px;background:#78a878"></div>
<div class="a" style="left:568px;top:870px;width:0;height:198px;border-left:0.8px dashed rgba(200,60,60,0.45)"></div>
<div class="a" style="left:652.8px;top:856px;width:1px;height:212px;background:#4a7ac8"></div>
<svg class="a" style="left:648px;top:848px" width="10" height="10"><path d="M0.5 0.5 h9 v5 l-4.5 4 l-4.5 -4z" fill="#4a80e0"/></svg>
<svg class="a" style="left:1883px;top:857px" width="12" height="20"><path d="M1 1 h8 v5 l-4 3 l-4 -3z" fill="#ddd"/><path d="M1 12 l4 -3 l3 3 l-4 4z" stroke="#bbb" fill="none" stroke-width="1.2"/></svg>
<!-- timeline bottom -->
<div class="a" style="left:2px;top:1068px;width:1891px;height:10.5px;background:#1a1a1a"></div>
<svg class="a" style="left:0;top:1068px" width="640" height="11">
<rect x="4" y="2" width="8" height="7" fill="#aaa"/><rect x="15" y="2" width="8" height="7" fill="#999"/><circle cx="19" cy="5.5" r="2.5" stroke="#ddd" fill="none"/>
<path d="M29 2 l-2 3.5 l2 3.5 M33 2 l2 3.5 l-2 3.5" stroke="#bbb" fill="none"/>
<circle cx="42" cy="4.5" r="2" fill="#bbb"/><rect x="39" y="6" width="7" height="3" fill="#bbb"/>
<path d="M566 8 l2.5 -3 l2.5 3z" fill="#ccc"/><line x1="577" y1="6.5" x2="603" y2="6.5" stroke="#444" stroke-width="1"/>
<circle cx="606.4" cy="6" r="2.8" stroke="#ddd" fill="none" stroke-width="1.2"/>
<path d="M618 9 l3 -4 l2 2 l2 -3 l4 5z" fill="#ccc"/>
</svg>
<div class="a" style="left:630px;top:1068px;width:402px;height:9.5px;background:#474747"></div>
<div class="t" style="left:65px;top:1070.5px;font-size:6.4px;color:#c8c8c8">Frame Render Time:</div>
<div class="t" style="left:131px;top:1070.5px;font-size:6.4px;color:#777">1ms</div>


<!-- right narrow panel -->
<div class="t" style="left:1904.5px;top:57px;font-size:7px;color:#e0e0e0;font-weight:bold;letter-spacing:-0.3px">Prev</div>
<div class="a" style="left:1897px;top:87px;width:23px;height:1px;background:#161616"></div>
<div class="t" style="left:1901px;top:92.5px;font-size:6.6px;color:#d0d0d0;letter-spacing:-0.2px">Shortc</div>
<div class="a" style="left:1902px;top:103px;width:18px;height:9px;background:#101010"></div>
<div class="t" style="left:1906.5px;top:104.5px;font-size:6.6px;color:#d8d8d8">Spac</div>
<div class="t" style="left:1901px;top:120px;font-size:6.6px;color:#d0d0d0;letter-spacing:-0.2px">Include</div>
<div class="a" style="left:1901.5px;top:133.5px;width:6.5px;height:6.5px;border:1.2px solid #ccc"></div>
<div class="t" style="left:1913px;top:133.5px;font-size:6.6px;color:#d0d0d0">C</div>
<div class="t" style="left:1901px;top:145.8px;font-size:6.6px;color:#d0d0d0;letter-spacing:-0.2px">Range</div>
<div class="a" style="left:1902px;top:157px;width:18px;height:9px;background:#101010"></div>
<div class="t" style="left:1906.5px;top:158.5px;font-size:6.6px;color:#d8d8d8">Wor</div>
<div class="t" style="left:1901px;top:170.8px;font-size:6.6px;color:#d0d0d0;letter-spacing:-0.2px">Play F</div>
<div class="a" style="left:1902px;top:182.5px;width:18px;height:9px;background:#101010"></div>
<div class="t" style="left:1906.5px;top:184px;font-size:6.6px;color:#d8d8d8">Curr</div>
<div class="t" style="left:1901px;top:196.8px;font-size:6.6px;color:#d0d0d0;letter-spacing:-0.2px">Frame</div>
<div class="a" style="left:1902px;top:206.5px;width:18px;height:9px;background:#141414"></div>
<div class="t" style="left:1905px;top:208px;font-size:6.6px;color:#d8d8d8">(30)</div>
<div class="a" style="left:1901.5px;top:220.5px;width:6.5px;height:6.5px;border:1.2px solid #ccc"></div>
<div class="t" style="left:1913px;top:220.5px;font-size:6.6px;color:#d0d0d0">Fi</div>
<div class="t" style="left:1901px;top:237.8px;font-size:6.6px;color:#d0d0d0;letter-spacing:-0.2px">On (Sp</div>
<div class="a" style="left:1901.5px;top:247.5px;width:6.5px;height:6.5px;border:1.2px solid #ccc"></div>
<div class="t" style="left:1913px;top:247.5px;font-size:6.6px;color:#d0d0d0">If</div>
<div class="a" style="left:1901.5px;top:258.5px;width:6.5px;height:6.5px;background:#ccc"></div>
<svg class="a" style="left:1901.5px;top:258.5px" width="7" height="7"><path d="M1.2 3.5 L2.8 5.2 L5.8 1.5" stroke="#222" fill="none" stroke-width="1.1"/></svg>
<div class="t" style="left:1913px;top:258.5px;font-size:6.6px;color:#d0d0d0">M</div>
<div class="a" style="left:1897px;top:320px;width:23px;height:1.5px;background:#111"></div>
<div class="a" style="left:1903px;top:327px;width:5px;height:1px;background:#999;box-shadow:0 2px 0 #999,0 4px 0 #999"></div>
<div class="t" style="left:1903.5px;top:340px;font-size:6.6px;color:#ddd;font-weight:bold">La</div>
<div class="t" style="left:1905.5px;top:402px;font-size:6px;color:#6a8ae0">1l</div>
<div class="a" style="left:1904.5px;top:410px;width:6px;height:0.8px;background:#666"></div>
<div class="t" style="left:1903.5px;top:422.3px;font-size:6.6px;color:#ddd;font-weight:bold">La</div>
<div class="a" style="left:1904px;top:436px;width:2px;height:36px;background:#3a3a3a;border-radius:1px"></div>
<div class="a" style="left:1897px;top:546px;width:23px;height:1.5px;background:#111"></div>
<div class="a" style="left:1903px;top:549px;width:5px;height:1px;background:#999;box-shadow:0 2px 0 #999,0 4px 0 #999"></div>
<div class="t" style="left:1901px;top:568px;font-size:6.6px;color:#ddd;letter-spacing:-0.3px">Align</div>
<svg class="a" style="left:1901px;top:585px" width="12" height="12"><rect x="1" y="1" width="1" height="10" fill="#ccc"/><rect x="3" y="2.5" width="5" height="3" fill="#ccc"/><rect x="3" y="6.5" width="8" height="3" fill="#ccc"/></svg>
<div class="a" style="left:1897px;top:605px;width:23px;height:1px;background:#262626"></div>
<div class="t" style="left:1901px;top:612px;font-size:6.6px;color:#ddd;letter-spacing:-0.3px">Distr</div>
<svg class="a" style="left:1901px;top:626px" width="12" height="12"><rect x="1" y="1" width="10" height="1" fill="#ccc"/><rect x="2.5" y="3" width="7" height="2.5" fill="#ccc"/><rect x="2.5" y="7" width="7" height="2.5" fill="#ccc"/><rect x="1" y="10.5" width="10" height="1" fill="#ccc"/></svg>
<div class="a" style="left:1897px;top:697px;width:23px;height:1.5px;background:#111"></div>
<div class="a" style="left:1903px;top:703.5px;width:5px;height:1px;background:#999;box-shadow:0 2px 0 #999,0 4px 0 #999"></div>
<div class="a" style="left:1905px;top:722px;width:9px;height:95px;background:#0c0c0c"></div>
<div class="a" style="left:1906px;top:723px;width:7px;height:3px;background:#222"></div>
<div class="a" style="left:1905.5px;top:814.5px;width:8px;height:1.2px;background:#4a9a4a"></div>
<div class="a" style="left:1897px;top:820px;width:23px;height:1.5px;background:#111"></div>
<div class="a" style="left:1903px;top:830px;width:5px;height:1px;background:#999;box-shadow:0 2px 0 #999,0 4px 0 #999"></div>
<div class="a" style="left:1897px;top:853.5px;width:23px;height:1px;background:#111"></div>
<svg class="a" style="left:1899px;top:858px" width="14" height="12"><rect x="3" y="1" width="9" height="9" fill="#ccc" rx="1"/><rect x="3" y="1" width="5" height="5" fill="#333"/></svg>
<div class="a" style="left:1897px;top:871.8px;width:23px;height:1px;background:#111"></div>
<div class="t" style="left:1904px;top:877.5px;font-size:6.6px;color:#ccc;font-weight:bold">Br</div>
<div class="a" style="left:1897px;top:890.5px;width:23px;height:1px;background:#111"></div>
<div class="t" style="left:1904px;top:894px;font-size:6.6px;color:#ccc;font-weight:bold">Pr</div>
<div class="a" style="left:1897px;top:906px;width:23px;height:1px;background:#111"></div>
<div class="a" style="left:1903px;top:911.5px;width:5px;height:1px;background:#999;box-shadow:0 2px 0 #999,0 4px 0 #999"></div>
<div class="t" style="left:1912px;top:922.5px;font-size:6.6px;color:#ccc">F</div>

<svg class="a" style="left:879px;top:1024px" width="9" height="12"><path d="M1.3 0.8 L1.3 8.6 L3.2 7 L4.6 10.2 L5.9 9.6 L4.6 6.6 L7.2 6.6 Z" fill="#f4f4f4" stroke="#000" stroke-width="1"/></svg>
</body></html>
